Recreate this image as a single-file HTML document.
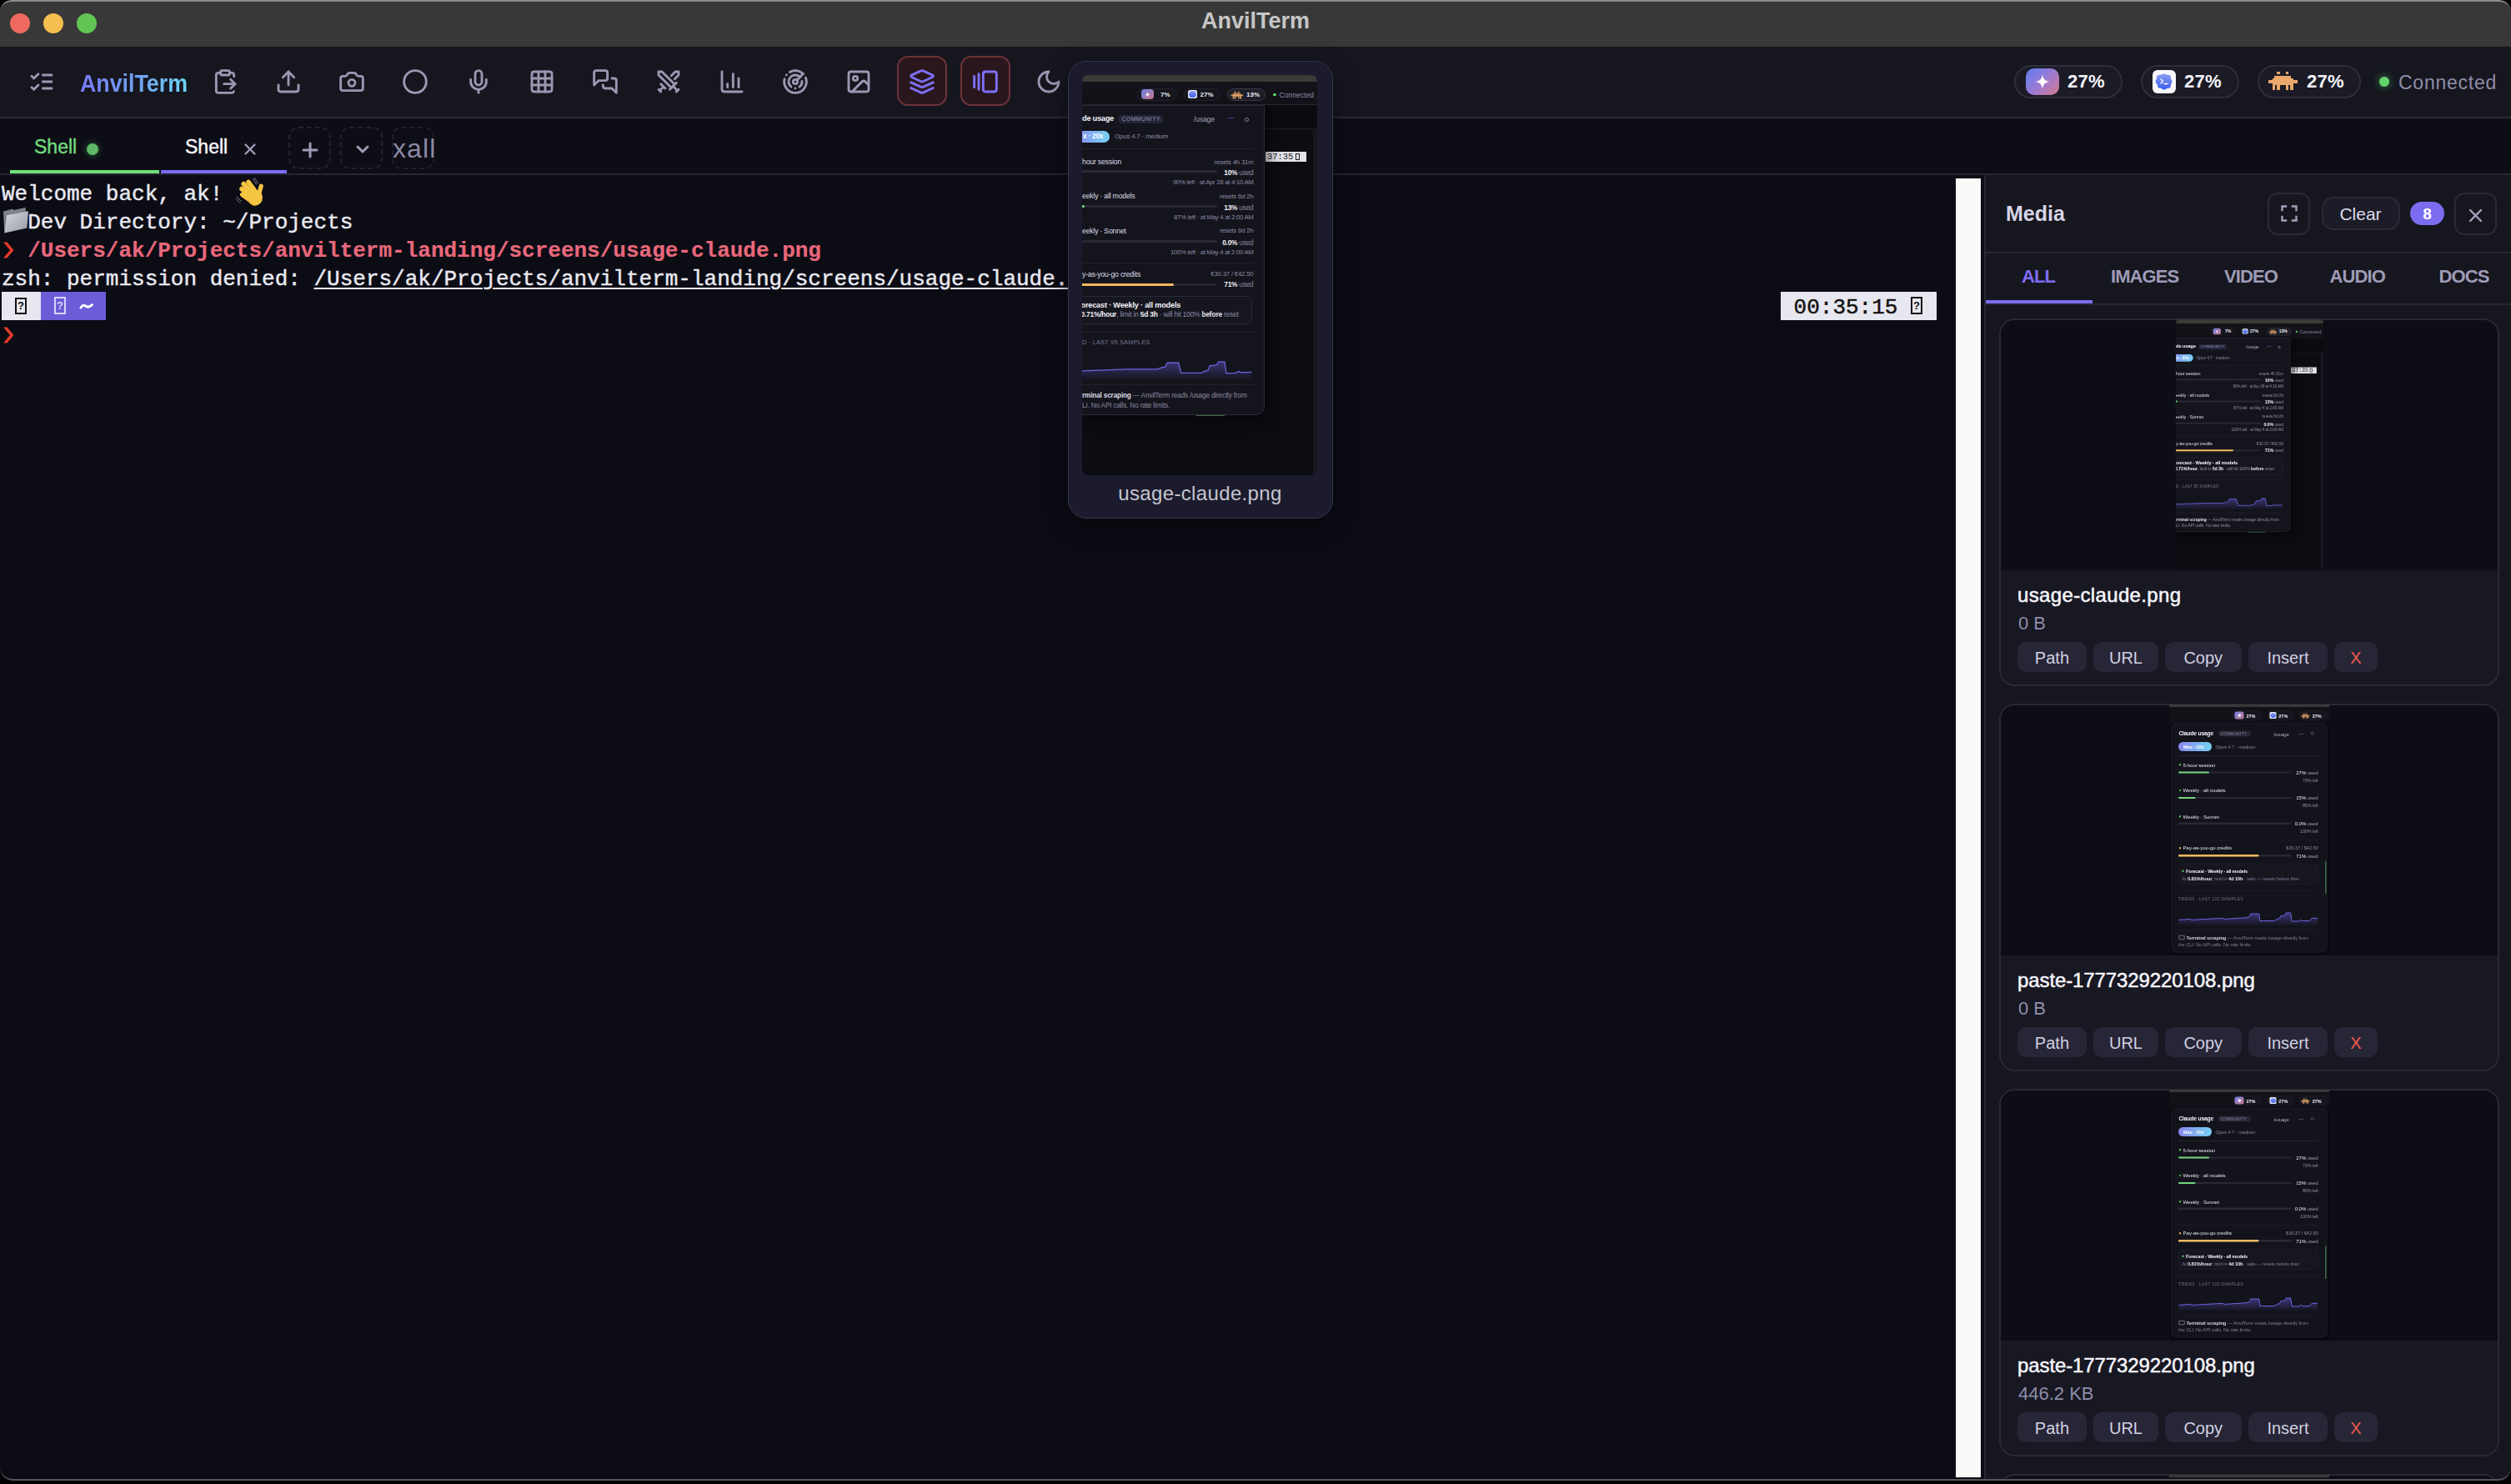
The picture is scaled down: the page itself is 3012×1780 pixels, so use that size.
<!DOCTYPE html>
<html><head><meta charset="utf-8">
<style>
*{box-sizing:border-box;margin:0;padding:0}
html,body{width:3012px;height:1780px;overflow:hidden;background:#000}
body{font-family:"Liberation Sans",sans-serif;position:relative}
.a{position:absolute}
#win{position:absolute;left:0;top:0;width:3012px;height:1776px;border-radius:14px;overflow:hidden;background:#0c0c15}
#winbot{position:absolute;left:0;top:1700px;width:3012px;height:76px;border-radius:0 0 16px 16px;border-bottom:2px solid #55555a;pointer-events:none}
#titlebar{position:absolute;left:0;top:0;width:3012px;height:56px;background:#383838;border-top:2px solid #8c8c8c;border-radius:14px 14px 0 0}
.tl{position:absolute;top:14px;width:24px;height:24px;border-radius:50%}
#title{position:absolute;left:0;width:3012px;top:8px;text-align:center;font-weight:bold;font-size:27px;color:#c6c6c6}
#toolbar{position:absolute;left:0;top:56px;width:3012px;height:86px;background:#16161f;border-bottom:2px solid #2a2a36}
#tabbar{position:absolute;left:0;top:142px;width:3012px;height:68px;background:#0d0d16;border-bottom:2px solid #262631}
.ic{position:absolute;width:32px;height:32px;fill:none;stroke:#9a98b2;stroke-width:2.15;stroke-linecap:round;stroke-linejoin:round}
.ic.on{stroke:#7f70f7}
.actbtn{position:absolute;top:67px;width:60px;height:60px;border-radius:13px;border:2px solid #6e3338;background:#2a171e}
.t{position:absolute;left:2px;font-family:"Liberation Mono",monospace;font-size:26px;line-height:34px;height:34px;white-space:pre;color:#e9e9f1;-webkit-text-stroke:0.45px currentColor}
#scroll{position:absolute;left:2346px;top:214px;width:30px;height:1558px;background:#fafaf8}
#media{position:absolute;left:2380px;top:210px;width:632px;height:1566px;background:#16161f;border-left:2px solid #282833;overflow:hidden}
.pill{position:absolute;top:78px;height:40px;border-radius:20px;border:2px solid #2e2e3a;background:#1b1b26}
.pct{position:absolute;top:86px;font-weight:bold;font-size:22px;color:#f4f4f8;letter-spacing:0.3px}
.card{left:2398px;width:600px;height:441px;border-radius:19px;border:2px solid #292934;background:#181823;overflow:hidden}
.cimg{position:absolute;left:0;top:0;width:100%;height:300px;background:#0d0d15}
.ctitle{left:2420px;font-size:24px;line-height:1;color:#f6f6fb;white-space:nowrap;letter-spacing:-0.1px;-webkit-text-stroke:0.5px #f6f6fb}
.csize{left:2421px;font-size:22px;line-height:1;color:#8f8daa;white-space:nowrap}
.cbtn{height:35.7px;border-radius:10px;background:#272637}
.cbtxt{text-align:center;font-size:20px;line-height:1;color:#d2d1e2;white-space:nowrap}
</style></head><body>
<div id="win">
  <div id="titlebar">
    <div class="tl" style="left:12px;background:#ee6a5f"></div>
    <div class="tl" style="left:52px;background:#f5bf4f"></div>
    <div class="tl" style="left:92px;background:#61c554"></div>
    <div id="title">AnvilTerm</div>
  </div>
  <div id="toolbar"></div>
  <!--TOOLBAR-->
  <svg class="ic" style="left:34px;top:82px" viewBox="0 0 24 24"><path d="m3 17 2 2 4-4"/><path d="m3 7 2 2 4-4"/><path d="M13 6h8"/><path d="M13 12h8"/><path d="M13 18h8"/></svg>
  <div class="a" id="logo" style="left:96px;top:85px;font-size:29.5px;line-height:1;font-weight:bold;white-space:nowrap;transform:scaleX(0.908);transform-origin:0 0;background:linear-gradient(90deg,#7a78f4 0%,#6fa0f2 50%,#6fd6f4 100%);-webkit-background-clip:text;background-clip:text;color:transparent">AnvilTerm</div>
  <svg class="ic" style="left:253.5px;top:82px" viewBox="0 0 24 24"><path d="M11 14h10"/><path d="M16 4h2a2 2 0 0 1 2 2v1.344"/><path d="m17 18 4-4-4-4"/><path d="M8 4H6a2 2 0 0 0-2 2v14a2 2 0 0 0 2 2h12a2 2 0 0 0 1.793-1.113"/><rect x="8" y="2" width="8" height="4" rx="1"/></svg>
  <svg class="ic" style="left:329.5px;top:82px" viewBox="0 0 24 24"><path d="M12 3v12"/><path d="m17 8-5-5-5 5"/><path d="M21 15v4a2 2 0 0 1-2 2H5a2 2 0 0 1-2-2v-4"/></svg>
  <svg class="ic" style="left:405.5px;top:82px" viewBox="0 0 24 24"><path d="M13.997 4a2 2 0 0 1 1.76 1.05l.486.9A2 2 0 0 0 18.003 7H20a2 2 0 0 1 2 2v9a2 2 0 0 1-2 2H4a2 2 0 0 1-2-2V9a2 2 0 0 1 2-2h1.997a2 2 0 0 0 1.759-1.048l.489-.904A2 2 0 0 1 10.004 4z"/><circle cx="12" cy="13" r="3"/></svg>
  <svg class="ic" style="left:481.5px;top:82px" viewBox="0 0 24 24"><circle cx="12" cy="12" r="10"/></svg>
  <svg class="ic" style="left:557.5px;top:82px" viewBox="0 0 24 24"><path d="M12 19v3"/><path d="M19 10v2a7 7 0 0 1-14 0v-2"/><rect x="9" y="2" width="6" height="13" rx="3"/></svg>
  <svg class="ic" style="left:633.5px;top:82px" viewBox="0 0 24 24"><rect width="18" height="18" x="3" y="3" rx="2"/><path d="M3 9h18"/><path d="M3 15h18"/><path d="M9 3v18"/><path d="M15 3v18"/></svg>
  <svg class="ic" style="left:709.5px;top:82px" viewBox="0 0 24 24"><path d="M14 9a2 2 0 0 1-2 2H6l-4 4V4a2 2 0 0 1 2-2h8a2 2 0 0 1 2 2z"/><path d="M18 9h2a2 2 0 0 1 2 2v11l-4-4h-6a2 2 0 0 1-2-2v-1"/></svg>
  <svg class="ic" style="left:785.5px;top:82px" viewBox="0 0 24 24"><polyline points="14.5 17.5 3 6 3 3 6 3 17.5 14.5"/><line x1="13" x2="19" y1="19" y2="13"/><line x1="16" x2="20" y1="16" y2="20"/><line x1="19" x2="21" y1="21" y2="19"/><polyline points="14.5 6.5 18 3 21 3 21 6 17.5 9.5"/><line x1="5" x2="9" y1="14" y2="18"/><line x1="7" x2="4" y1="17" y2="20"/><line x1="3" x2="5" y1="19" y2="21"/></svg>
  <svg class="ic" style="left:861.5px;top:82px" viewBox="0 0 24 24"><path d="M3 3v16a2 2 0 0 0 2 2h16"/><path d="M18 17V9"/><path d="M13 17V5"/><path d="M8 17v-3"/></svg>
  <svg class="ic" style="left:937.5px;top:82px" viewBox="0 0 24 24"><path d="M19.07 4.93A10 10 0 0 0 6.99 3.34"/><path d="M4 6h.01"/><path d="M2.29 9.62A10 10 0 1 0 21.31 8.35"/><path d="M16.24 7.76A6 6 0 1 0 8.23 16.67"/><path d="M12 18h.01"/><path d="M17.99 11.66A6 6 0 0 1 15.77 16.67"/><circle cx="12" cy="12" r="2"/><path d="m13.41 10.59 5.66-5.66"/></svg>
  <svg class="ic" style="left:1013.5px;top:82px" viewBox="0 0 24 24"><rect width="18" height="18" x="3" y="3" rx="2" ry="2"/><circle cx="9" cy="9" r="2"/><path d="m21 15-3.086-3.086a2 2 0 0 0-2.828 0L6 21"/></svg>
  <div class="actbtn" style="left:1076px"></div>
  <svg class="ic on" style="left:1089.5px;top:82px" viewBox="0 0 24 24"><path d="m12.83 2.18a2 2 0 0 0-1.66 0L2.6 6.08a1 1 0 0 0 0 1.83l8.58 3.91a2 2 0 0 0 1.66 0l8.58-3.9a1 1 0 0 0 0-1.83Z"/><path d="m22 17.65-9.17 4.16a2 2 0 0 1-1.66 0L2 17.65"/><path d="m22 12.65-9.17 4.16a2 2 0 0 1-1.66 0L2 12.65"/></svg>
  <div class="actbtn" style="left:1152px"></div>
  <svg class="ic on" style="left:1165.5px;top:82px" viewBox="0 0 24 24"><path d="M2 7v10"/><path d="M6 5v14"/><rect width="12" height="18" x="10" y="3" rx="2"/></svg>
  <svg class="ic" style="left:1241.5px;top:82px" viewBox="0 0 24 24"><path d="M12 3a6 6 0 0 0 9 9 9 9 0 1 1-9-9Z"/></svg>

  <div class="pill" style="left:2416px;width:130px"></div>
  <div class="a" style="left:2430px;top:82px;width:40px;height:32px;border-radius:10px;background:linear-gradient(135deg,#5d80ee 0%,#9b7ad6 50%,#d57a8a 100%)"></div>
  <svg class="a" style="left:2440px;top:88px;width:20px;height:20px" viewBox="0 0 20 20"><path d="M10 1 C10.8 7 13 9.2 19 10 C13 10.8 10.8 13 10 19 C9.2 13 7 10.8 1 10 C7 9.2 9.2 7 10 1Z" fill="#fff"/></svg>
  <div class="pct" style="left:2480px;top:87.2px;line-height:1">27%</div>
  <div class="pill" style="left:2568px;width:118px"></div>
  <div class="a" style="left:2582px;top:84px;width:28px;height:28px;border-radius:6px;background:#f8f8fb"></div>
  <svg class="a" style="left:2584px;top:86px;width:24px;height:24px" viewBox="0 0 24 24"><defs><linearGradient id="bg2" x1="0" y1="0" x2="0" y2="1"><stop offset="0" stop-color="#8aa0f4"/><stop offset="1" stop-color="#3a5cf0"/></linearGradient></defs><path d="M12 2.5c1.6 0 2.4 1 3.6 1.3 1.3.3 2.6-.2 3.6.8s.6 2.3.9 3.6c.3 1.2 1.4 2 1.4 3.6s-1.1 2.4-1.4 3.6c-.3 1.3.1 2.6-.9 3.6s-2.3.6-3.6.9c-1.2.3-2 1.6-3.6 1.6s-2.4-1.3-3.6-1.6c-1.3-.3-2.6.1-3.6-.9s-.6-2.3-.9-3.6C2.6 14.2 1.5 13.4 1.5 11.8s1.1-2.4 1.4-3.6c.3-1.3-.1-2.6.9-3.6s2.3-.5 3.6-.8C8.6 3.5 10.4 2.5 12 2.5z" fill="url(#bg2)"/><path d="M8 9l2.5 2.5L8 14" stroke="#fff" stroke-width="1.4" fill="none" stroke-linecap="round"/><path d="M12 14.5h4" stroke="#fff" stroke-width="1.4" stroke-linecap="round"/></svg>
  <div class="pct" style="left:2620px;top:87.2px;line-height:1">27%</div>
  <div class="pill" style="left:2708px;width:124px"></div>
  <svg class="a" style="left:2715px;top:80px;width:50px;height:32px" viewBox="0 0 50 32" shape-rendering="crispEdges" fill="#e9a86c"><rect x="16" y="6" width="4" height="3"/><rect x="27" y="6" width="3" height="3"/><rect x="13" y="11" width="20" height="3"/><rect x="11" y="14" width="25" height="2"/><rect x="6" y="16" width="35" height="4"/><rect x="11" y="20" width="25" height="2"/><rect x="11" y="22" width="3" height="6"/><rect x="16" y="22" width="4" height="6"/><rect x="27" y="22" width="3" height="6"/><rect x="32" y="22" width="4" height="6"/></svg>
  <div class="pct" style="left:2767px;top:87.2px;line-height:1">27%</div>
  <div class="a" style="left:2854px;top:92px;width:12px;height:12px;border-radius:50%;background:#62d46e;box-shadow:0 0 8px 2px rgba(80,200,100,0.35)"></div>
  <div class="a" style="left:2877px;top:87.5px;font-size:23px;line-height:1;color:#8f8da8;white-space:nowrap;letter-spacing:0.75px">Connected</div>
<!--/TOOLBAR-->
  <div id="tabbar"></div>
  <!--TABS-->
  <div class="a" style="left:12px;top:204px;width:179px;height:4.3px;background:#72e07c"></div>
  <div class="a" style="left:193px;top:204px;width:151px;height:4.3px;background:#7a6cf5"></div>
  <div class="a" style="left:41px;top:164.7px;font-size:23px;line-height:1;color:#72d97c;white-space:nowrap;-webkit-text-stroke:0.45px #72d97c">Shell</div>
  <div class="a" style="left:104px;top:171.5px;width:14px;height:14px;border-radius:50%;background:#5fb866;box-shadow:0 0 6px 2px rgba(70,160,80,0.35)"></div>
  <div class="a" style="left:222px;top:164.7px;font-size:23px;line-height:1;color:#f6f6fa;white-space:nowrap;-webkit-text-stroke:0.45px #f6f6fa">Shell</div>
  <svg class="a" style="left:292px;top:171px;width:16px;height:16px" viewBox="0 0 16 16"><path d="M2.5 2.5l11 11M13.5 2.5l-11 11" stroke="#9d9bb4" stroke-width="2.4" stroke-linecap="round"/></svg>
  <div class="a" style="left:346px;top:152px;width:51px;height:51px;border-radius:12px;border:2px dashed #23232d"></div>
  <svg class="a" style="left:362px;top:170px;width:20px;height:20px" viewBox="0 0 20 20"><path d="M10 2v16M2 10h16" stroke="#9d9bb4" stroke-width="3" stroke-linecap="round"/></svg>
  <div class="a" style="left:408px;top:152px;width:51px;height:51px;border-radius:12px;border:2px dashed #23232d"></div>
  <svg class="a" style="left:426px;top:171px;width:18px;height:16px" viewBox="0 0 18 16"><path d="M3 5l6 6 6-6" stroke="#9d9bb4" stroke-width="3" fill="none" stroke-linecap="round" stroke-linejoin="round"/></svg>
  <div class="a" style="left:470px;top:152px;width:51px;height:51px;border-radius:12px;border:2px dashed #1f1f29"></div>
  <div class="a" style="left:471px;top:162.4px;font-size:32px;line-height:1;color:#8b89a2;white-space:nowrap;letter-spacing:1.1px">xall</div>
<!--/TABS-->
  <div id="terminal">
  <!--TERM-->
  <div class="t" style="top:216px">Welcome back, ak!</div>
  <svg class="a" style="left:275px;top:208px;width:50px;height:44px" viewBox="0 0 50 44">
    <g stroke="#f4c443" stroke-linecap="round" fill="none">
      <path d="M23 10.5L30 20" stroke-width="5.6"/>
      <path d="M17.2 12.5L26 22.5" stroke-width="5.6"/>
      <path d="M15 18.5L24.5 26.5" stroke-width="5.6"/>
      <path d="M15.8 25.5L24 31.5" stroke-width="5.6"/>
      <path d="M38.2 15.2L35.5 25" stroke-width="5.2"/>
    </g>
    <ellipse cx="31" cy="29" rx="9" ry="9.6" fill="#f4c443"/>
    <path d="M22 31c2 5 6 8 10 7.5" stroke="#e6a22e" stroke-width="1.2" fill="none" opacity="0.6"/>
    <path d="M28.5 6.5l4 6.5M30.5 5.5l4 6.5M9 28l5.5 5.5M8 30.5l5 5" stroke="#7c7f8e" stroke-width="1" stroke-linecap="round"/>
  </svg>
  <svg class="a" style="left:0px;top:244px;width:40px;height:40px" viewBox="0 0 40 40">
    <defs><linearGradient id="fgF" x1="0" y1="0" x2="1" y2="1"><stop offset="0" stop-color="#d6dade"/><stop offset="1" stop-color="#969aa2"/></linearGradient></defs>
    <path d="M4 9.5L15.5 6.4L16.3 7.9L30.6 5L31 9.8L5.4 35.6Z" fill="#7b828b"/>
    <path d="M8.1 14.3L34 9.2L32.3 29.6L5.4 35.6Z" fill="url(#fgF)"/>
  </svg>
  <div class="t" style="top:250px">  Dev Directory: ~/Projects</div>
  <svg class="a" style="left:3px;top:289px;width:14px;height:22px" viewBox="0 0 14 22"><path d="M1 1.5h4.5l8 9.5-8 9.5H1l8-9.5z" fill="#e5392c"/></svg>
  <div class="t" style="top:284px;color:#e8687b;font-weight:bold;-webkit-text-stroke:0.2px #e8687b">  /Users/ak/Projects/anvilterm-landing/screens/usage-claude.png</div>
  <div class="t" style="top:318px">zsh: permission denied: <span style="text-decoration:underline;text-decoration-thickness:2px;text-underline-offset:3px">/Users/ak/Projects/anvilterm-landing/screens/usage-claude.png</span></div>
  <div class="a" style="left:2px;top:350px;width:47px;height:34px;background:#e7e7ef"></div>
  <div class="a" style="left:49px;top:350px;width:78px;height:34px;background:#6b5cd8"></div>
  <div class="a" style="left:18px;top:357px;width:14px;height:20px;border:2px solid #111;font:bold 13px/16px 'Liberation Sans',sans-serif;color:#111;text-align:center">?</div>
  <div class="a" style="left:65px;top:356px;width:14px;height:21px;border:2px solid #d9d4fb;font:bold 13px/17px 'Liberation Sans',sans-serif;color:#d9d4fb;text-align:center">?</div>
  <svg class="a" style="left:95px;top:361px;width:18px;height:12px" viewBox="0 0 18 12"><path d="M2 8c1.5-3 3.5-3.5 6-1.8s4.5 1.5 7.5-1.7" stroke="#fff" stroke-width="3" fill="none" stroke-linecap="round"/></svg>
  <svg class="a" style="left:3px;top:391px;width:14px;height:22px" viewBox="0 0 14 22"><path d="M1 1.5h4.5l8 9.5-8 9.5H1l8-9.5z" fill="#e5392c"/></svg>
  <div class="a" style="left:2136px;top:350px;width:187px;height:34px;background:#e7e7ef"></div>
  <div class="t" style="left:2136px;top:352px;color:#111"> 00:35:15</div>
  <div class="a" style="left:2292px;top:356px;width:14px;height:21px;border:2px solid #111;font:bold 13px/17px 'Liberation Sans',sans-serif;color:#111;text-align:center">?</div>
<!--/TERM-->
  </div>
  <div id="scroll"></div>
  <div id="media"></div>
  <!--MEDIA-->
  <div class="a" style="left:2406px;top:243.8px;font-size:25px;line-height:1;font-weight:bold;color:#d6d4e6;white-space:nowrap">Media</div>
  <div class="a" style="left:2720px;top:230.5px;width:51px;height:51px;border-radius:12px;border:2px solid #2a2a36"></div>
  <svg class="a" style="left:2735px;top:244.5px;width:22px;height:22px" viewBox="0 0 22 22"><path d="M2.5 7V2.5H7M15 2.5h4.5V7M19.5 15v4.5H15M7 19.5H2.5V15" stroke="#a3a1ba" stroke-width="2.4" fill="none" stroke-linecap="square"/></svg>
  <div class="a" style="left:2784.5px;top:236px;width:94px;height:40px;border-radius:14px;border:2px solid #2a2a36;background:#1c1b28"></div>
  <div class="a" style="left:2784.5px;width:94px;text-align:center;top:245.9px;font-size:21px;line-height:1;color:#dedcec;white-space:nowrap">Clear</div>
  <div class="a" style="left:2891px;top:241.7px;width:41px;height:28.5px;border-radius:14px;background:#7b6cf0"></div>
  <div class="a" style="left:2891px;width:41px;text-align:center;top:247px;font-size:19px;line-height:1;font-weight:bold;color:#fff">8</div>
  <div class="a" style="left:2944px;top:230.5px;width:51px;height:51px;border-radius:12px;border:2px solid #2a2a36"></div>
  <svg class="a" style="left:2961px;top:250px;width:17px;height:17px" viewBox="0 0 17 17"><path d="M2 2l13 13M15 2L2 15" stroke="#a3a1ba" stroke-width="2.4" stroke-linecap="round"/></svg>
  <div class="a" style="left:2382px;top:302px;width:630px;height:2px;background:#262631"></div>
  <div class="a" style="left:2382px;top:360px;width:128px;height:4px;background:#7b6cf0"></div>
  <div class="a" style="left:2382px;top:364px;width:630px;height:2px;background:#262631"></div>
  <div class="a" style="left:2365px;width:160px;text-align:center;top:321.4px;font-size:22px;line-height:1;font-weight:bold;color:#7d6ef3;white-space:nowrap;letter-spacing:-0.9px">ALL</div>
  <div class="a" style="left:2492.7px;width:160px;text-align:center;top:321.4px;font-size:22px;line-height:1;font-weight:bold;color:#9e9cb6;white-space:nowrap;letter-spacing:-0.9px">IMAGES</div>
  <div class="a" style="left:2620px;width:160px;text-align:center;top:321.4px;font-size:22px;line-height:1;font-weight:bold;color:#9e9cb6;white-space:nowrap;letter-spacing:-0.9px">VIDEO</div>
  <div class="a" style="left:2747.7px;width:160px;text-align:center;top:321.4px;font-size:22px;line-height:1;font-weight:bold;color:#9e9cb6;white-space:nowrap;letter-spacing:-0.9px">AUDIO</div>
  <div class="a" style="left:2875.6px;width:160px;text-align:center;top:321.4px;font-size:22px;line-height:1;font-weight:bold;color:#9e9cb6;white-space:nowrap;letter-spacing:-0.9px">DOCS</div>
  <div class="a card" style="top:382px"><div class="cimg"></div></div>
  <!--THUMB0--><div class="a" style="left:2610px;top:383px;width:282px;height:480px;transform:scale(0.6277,0.625);transform-origin:0 0"><div class="a" style="left:0;top:0;width:282px;height:480px;overflow:hidden;border-radius:7px 7px 8px 8px;background:#0c0c13"><div class="a" style="left:0.00px;top:0.00px;width:282.00px;height:7.50px;background:#3a3a36"></div><div class="a" style="left:0.00px;top:7.50px;width:282.00px;height:28.00px;background:#121218;border-bottom:1px solid #2a2a33"></div><div class="a" style="left:65.70px;top:15.90px;width:48.00px;height:14.80px;border-radius:8px;border:1px solid #24242e;background:#15151d"></div><div class="a" style="left:70.80px;top:17.20px;width:14.80px;height:11.80px;border-radius:4px;background:linear-gradient(135deg,#6a80e8,#d07a8e)"></div><svg class="a" style="left:74.7px;top:19.6px;width:7px;height:7px" viewBox="0 0 20 20"><path d="M10 1C10.8 7 13 9.2 19 10 13 10.8 10.8 13 10 19 9.2 13 7 10.8 1 10 7 9.2 9.2 7 10 1Z" fill="#fff"/></svg><div class="a" style="left:94.00px;top:19.53px;font-size:8px;line-height:1;color:#f2f2f7;font-weight:bold;white-space:nowrap;">7%</div><div class="a" style="left:122.30px;top:15.90px;width:43.40px;height:14.80px;border-radius:8px;border:1px solid #24242e;background:#15151d"></div><div class="a" style="left:127.00px;top:17.60px;width:10.80px;height:10.80px;border-radius:2.5px;background:#f0f0f6"></div><div class="a" style="left:128.20px;top:18.80px;width:8.40px;height:8.40px;border-radius:50%;background:linear-gradient(#8aa0f4,#4060f0)"></div><div class="a" style="left:141.50px;top:19.53px;font-size:8px;line-height:1;color:#f2f2f7;font-weight:bold;white-space:nowrap;">27%</div><div class="a" style="left:174.30px;top:15.90px;width:46.00px;height:14.80px;border-radius:8px;border:1px solid #3a3a46;background:#1e1e28"></div><svg class="a" style="left:178px;top:18.5px;width:16px;height:10px" viewBox="6 5 36 24" fill="#e9a86c"><rect x="16" y="6" width="4" height="3"/><rect x="27" y="6" width="3" height="3"/><rect x="13" y="11" width="20" height="3"/><rect x="11" y="14" width="25" height="2"/><rect x="6" y="16" width="35" height="4"/><rect x="11" y="20" width="25" height="2"/><rect x="11" y="22" width="3" height="6"/><rect x="16" y="22" width="4" height="6"/><rect x="27" y="22" width="3" height="6"/><rect x="32" y="22" width="4" height="6"/></svg><div class="a" style="left:197.00px;top:19.53px;font-size:8px;line-height:1;color:#f2f2f7;font-weight:bold;white-space:nowrap;">13%</div><div class="a" style="left:229.00px;top:21.80px;width:3.60px;height:3.60px;border-radius:50%;background:#5fd46a"></div><div class="a" style="left:236.50px;top:19.52px;font-size:8.6px;line-height:1;color:#8f8da8;font-weight:normal;white-space:nowrap;">Connected</div><div class="a" style="left:218.00px;top:36.40px;width:64.00px;height:29.00px;background:#0b0b10;border-bottom:1px solid #1e1e26"></div><div class="a" style="left:220.30px;top:91.60px;width:48.60px;height:12.80px;background:#e2e2ea"></div><div class="a" style="left:222.00px;top:93.00px;font-size:10.4px;line-height:1;color:#222;font-weight:normal;white-space:nowrap;font-family:'Liberation Mono',monospace">37:35</div><div class="a" style="left:256.00px;top:93.50px;width:5.00px;height:8.00px;border:1px solid #222"></div><div class="a" style="left:276.50px;top:66.00px;width:5.50px;height:414.00px;background:#17171e"></div><div class="a" style="left:-12.00px;top:36.40px;width:230.60px;height:372.10px;background:#14141c;border:1px solid #2c2c38;border-radius:0 0 10px 10px;box-shadow:4px 6px 18px rgba(0,0,0,0.55)"></div><div class="a" style="left:0.00px;top:48.13px;font-size:9.3px;line-height:1;color:#f2f2f7;font-weight:bold;white-space:nowrap;letter-spacing:-0.3px;">de usage</div><div class="a" style="left:44.20px;top:47.90px;width:52.50px;height:10.40px;border-radius:3px;background:#24243a"></div><div class="a" style="left:47.50px;top:49.84px;font-size:6.8px;line-height:1;color:#9a98b0;font-weight:normal;white-space:nowrap;letter-spacing:0.5px;">COMMUNITY</div><div class="a" style="left:133.80px;top:49.05px;font-size:8.8px;line-height:1;color:#a0a0b2;font-weight:normal;white-space:nowrap;letter-spacing:-0.2px;">/usage</div><div class="a" style="left:174.50px;top:48.23px;font-size:8px;line-height:1;color:#7b6cf0;font-weight:bold;white-space:nowrap;">···</div><div class="a" style="left:195.20px;top:50.80px;width:4.80px;height:4.80px;border-radius:50%;border:1px solid #8c8aa2"></div><div class="a" style="left:-10.00px;top:66.80px;width:43.00px;height:14.50px;border-radius:7.5px;background:linear-gradient(90deg,#8a8cf0,#78d2f2)"></div><div class="a" style="left:1.00px;top:70.36px;font-size:8.2px;line-height:1;color:#fff;font-weight:bold;white-space:nowrap;letter-spacing:-0.2px;">x · 20x</div><div class="a" style="left:39.10px;top:70.13px;font-size:8.0px;line-height:1;color:#8c8aa2;font-weight:normal;white-space:nowrap;letter-spacing:-0.25px;">Opus 4.7 · medium</div><div class="a" style="left:0.00px;top:88.30px;width:205.50px;height:1.00px;background:#23232d"></div><div class="a" style="left:0.00px;top:100.05px;font-size:8.8px;line-height:1;color:#dcdce6;font-weight:normal;white-space:nowrap;letter-spacing:-0.25px;">hour session</div><div class="a" style="left:-194.50px;width:400px;text-align:right;top:100.90px;font-size:7.8px;line-height:1;color:#8c8aa2;font-weight:normal;white-space:nowrap;letter-spacing:-0.2px;">resets 4h 31m</div><div class="a" style="left:-10.00px;top:113.80px;width:171.60px;height:3.60px;border-radius:2px;background:#282834"></div><div class="a" style="left:-194.50px;width:400px;text-align:right;top:113.09px;font-size:8.4px;line-height:1;color:#8c8aa2;font-weight:normal;white-space:nowrap;letter-spacing:-0.25px;"><b style="color:#f2f2f7">10%</b> used</div><div class="a" style="left:-194.50px;width:400px;text-align:right;top:125.40px;font-size:7.8px;line-height:1;color:#8c8aa2;font-weight:normal;white-space:nowrap;letter-spacing:-0.3px;">90% left · at Apr 28 at 4:10 AM</div><div class="a" style="left:0.00px;top:141.05px;font-size:8.8px;line-height:1;color:#dcdce6;font-weight:normal;white-space:nowrap;letter-spacing:-0.25px;">eekly · all models</div><div class="a" style="left:-194.50px;width:400px;text-align:right;top:141.90px;font-size:7.8px;line-height:1;color:#8c8aa2;font-weight:normal;white-space:nowrap;letter-spacing:-0.2px;">resets 6d 2h</div><div class="a" style="left:-10.00px;top:155.80px;width:171.60px;height:3.60px;border-radius:2px;background:#282834"></div><div class="a" style="left:-10.00px;top:155.80px;width:13.00px;height:3.60px;border-radius:2px;background:#6fd67a"></div><div class="a" style="left:-194.50px;width:400px;text-align:right;top:155.09px;font-size:8.4px;line-height:1;color:#8c8aa2;font-weight:normal;white-space:nowrap;letter-spacing:-0.25px;"><b style="color:#f2f2f7">13%</b> used</div><div class="a" style="left:-194.50px;width:400px;text-align:right;top:167.40px;font-size:7.8px;line-height:1;color:#8c8aa2;font-weight:normal;white-space:nowrap;letter-spacing:-0.3px;">87% left · at May 4 at 2:00 AM</div><div class="a" style="left:0.00px;top:182.55px;font-size:8.8px;line-height:1;color:#dcdce6;font-weight:normal;white-space:nowrap;letter-spacing:-0.25px;">eekly · Sonnet</div><div class="a" style="left:-194.50px;width:400px;text-align:right;top:183.40px;font-size:7.8px;line-height:1;color:#8c8aa2;font-weight:normal;white-space:nowrap;letter-spacing:-0.2px;">resets 6d 2h</div><div class="a" style="left:-10.00px;top:197.80px;width:171.60px;height:3.60px;border-radius:2px;background:#282834"></div><div class="a" style="left:-194.50px;width:400px;text-align:right;top:197.09px;font-size:8.4px;line-height:1;color:#8c8aa2;font-weight:normal;white-space:nowrap;letter-spacing:-0.25px;"><b style="color:#f2f2f7">0.0%</b> used</div><div class="a" style="left:-194.50px;width:400px;text-align:right;top:209.40px;font-size:7.8px;line-height:1;color:#8c8aa2;font-weight:normal;white-space:nowrap;letter-spacing:-0.3px;">100% left · at May 4 at 2:00 AM</div><div class="a" style="left:0.00px;top:225.40px;width:205.50px;height:1.00px;background:#23232d"></div><div class="a" style="left:0.00px;top:234.55px;font-size:8.8px;line-height:1;color:#dcdce6;font-weight:normal;white-space:nowrap;letter-spacing:-0.25px;">y-as-you-go credits</div><div class="a" style="left:-194.50px;width:400px;text-align:right;top:235.40px;font-size:7.8px;line-height:1;color:#8c8aa2;font-weight:normal;white-space:nowrap;letter-spacing:-0.2px;">€30.37 / €42.50</div><div class="a" style="left:-10.00px;top:250.00px;width:171.20px;height:3.00px;border-radius:2px;background:#262630"></div><div class="a" style="left:-10.00px;top:250.00px;width:119.80px;height:3.00px;border-radius:2px;background:#f0b860"></div><div class="a" style="left:-194.50px;width:400px;text-align:right;top:247.39px;font-size:8.4px;line-height:1;color:#8c8aa2;font-weight:normal;white-space:nowrap;letter-spacing:-0.25px;"><b style="color:#f2f2f7">71%</b> used</div><div class="a" style="left:-10.00px;top:264.50px;width:214.40px;height:34.00px;border-radius:6px;border:1px solid #2a2a36;background:#16161f"></div><div class="a" style="left:-1.50px;top:271.71px;font-size:9.2px;line-height:1;color:#f2f2f7;font-weight:bold;white-space:nowrap;letter-spacing:-0.2px;">orecast · Weekly · all models</div><div class="a" style="left:-1.50px;top:283.39px;font-size:8.4px;line-height:1;color:#8c8aa2;font-weight:normal;white-space:nowrap;letter-spacing:-0.2px;"><b style="color:#f2f2f7">0.71%/hour</b>, limit in <b style="color:#f2f2f7">5d 3h</b> · will hit 100% <b style="color:#e0e0ea">before</b> reset</div><div class="a" style="left:0.00px;top:308.30px;width:205.50px;height:1.00px;background:#23232d"></div><div class="a" style="left:0.00px;top:316.57px;font-size:7.6px;line-height:1;color:#76748c;font-weight:normal;white-space:nowrap;letter-spacing:0.1px;">D · LAST 95 SAMPLES</div><svg class="a" style="left:0;top:0;width:282px;height:480px;overflow:visible" viewBox="0 0 282 480"><defs><linearGradient id="cgA2" x1="0" y1="0" x2="0" y2="1"><stop offset="0" stop-color="#5b50b8" stop-opacity="0.55"/><stop offset="1" stop-color="#5b50b8" stop-opacity="0"/></linearGradient></defs><path d="M-0.3 354.8 L53.0 352.8 L90.6 352.8 L94.7 351.1 L100.0 350.0 L102.0 345.2 L115.6 344.8 L118.7 357.3 L142.8 357.3 L146.9 355.3 L151.1 354.2 L153.2 348.6 L161.5 348.0 L163.6 343.8 L170.9 343.8 L173.0 357.8 L184.5 357.3 L187.6 355.3 L190.8 356.9 L203.3 356.3 L203.3 366 L-0.3 366 Z" fill="url(#cgA2)" transform="translate(0,0)"/><path d="M-0.3 354.8 L53.0 352.8 L90.6 352.8 L94.7 351.1 L100.0 350.0 L102.0 345.2 L115.6 344.8 L118.7 357.3 L142.8 357.3 L146.9 355.3 L151.1 354.2 L153.2 348.6 L161.5 348.0 L163.6 343.8 L170.9 343.8 L173.0 357.8 L184.5 357.3 L187.6 355.3 L190.8 356.9 L203.3 356.3" fill="none" stroke="#6e62e0" stroke-width="1.3"/></svg><div class="a" style="left:0.00px;top:371.30px;width:205.50px;height:1.00px;background:#23232d"></div><div class="a" style="left:0.00px;top:381.06px;font-size:8.2px;line-height:1;color:#8c8aa2;font-weight:normal;white-space:nowrap;letter-spacing:-0.15px;"><b style="color:#dcdce6">rminal scraping</b> — AnvilTerm reads /usage directly from</div><div class="a" style="left:0.00px;top:392.56px;font-size:8.2px;line-height:1;color:#8c8aa2;font-weight:normal;white-space:nowrap;letter-spacing:-0.15px;">LI. No API calls. No rate limits.</div><div class="a" style="left:137.00px;top:407.50px;width:34.00px;height:1.20px;background:#3b6b45"></div></div></div><!--/THUMB0-->
  <div class="a ctitle" style="top:701.6px;letter-spacing:0.35px">usage-claude.png</div>
  <div class="a csize" style="top:737px">0 B</div>
  <div class="a cbtn" style="left:2420.1px;top:770.3px;width:82.7px"></div>
  <div class="a cbtxt" style="left:2420.1px;top:778.9px;width:82.7px;">Path</div>
  <div class="a cbtn" style="left:2511.3px;top:770.3px;width:77.3px"></div>
  <div class="a cbtxt" style="left:2511.3px;top:778.9px;width:77.3px;">URL</div>
  <div class="a cbtn" style="left:2596.9px;top:770.3px;width:91.7px"></div>
  <div class="a cbtxt" style="left:2596.9px;top:778.9px;width:91.7px;">Copy</div>
  <div class="a cbtn" style="left:2697.3px;top:770.3px;width:94.3px"></div>
  <div class="a cbtxt" style="left:2697.3px;top:778.9px;width:94.3px;">Insert</div>
  <div class="a cbtn" style="left:2800px;top:770.3px;width:51.8px"></div>
  <div class="a cbtxt" style="left:2800px;top:778.9px;width:51.8px;color:#ef5b4d">X</div>
  <div class="a card" style="top:844px"><div class="cimg"></div></div>
  <!--THUMB1--><div class="a" style="left:2602px;top:845px;width:384px;height:600px;transform:scale(0.5);transform-origin:0 0"><div class="a" style="left:0;top:0;width:384px;height:600px;overflow:hidden;background:#0c0c13"><div class="a" style="left:0.00px;top:0.00px;width:384.00px;height:6.00px;background:#38383a"></div><div class="a" style="left:0.00px;top:6.00px;width:384.00px;height:37.00px;background:#111117"></div><div class="a" style="left:150.60px;top:14.20px;width:70.40px;height:23.40px;border-radius:12px;border:1px solid #262630;background:#16161e"></div><div class="a" style="left:157.00px;top:17.20px;width:22.40px;height:17.60px;border-radius:5px;background:linear-gradient(135deg,#6a80e8,#d07a8e)"></div><div class="a" style="left:164.80px;top:22.60px;width:6.80px;height:6.80px;border-radius:50%;background:#fff"></div><div class="a" style="left:184.80px;top:23.49px;font-size:11px;line-height:1;color:#f2f2f7;font-weight:bold;white-space:nowrap;">27%</div><div class="a" style="left:234.80px;top:14.20px;width:64.00px;height:23.40px;border-radius:12px;border:1px solid #262630;background:#16161e"></div><div class="a" style="left:241.20px;top:18.00px;width:16.00px;height:16.00px;border-radius:3px;background:#f0f0f6"></div><div class="a" style="left:242.80px;top:19.60px;width:12.80px;height:12.80px;border-radius:50%;background:linear-gradient(#8aa0f4,#4060f0)"></div><div class="a" style="left:262.60px;top:23.49px;font-size:11px;line-height:1;color:#f2f2f7;font-weight:bold;white-space:nowrap;">27%</div><div class="a" style="left:311.40px;top:14.20px;width:67.20px;height:23.40px;border-radius:12px;border:1px solid #262630;background:#16161e"></div><svg class="a" style="left:316px;top:20px;width:22px;height:14px" viewBox="6 5 36 24" fill="#e9a86c"><rect x="16" y="6" width="4" height="3"/><rect x="27" y="6" width="3" height="3"/><rect x="13" y="11" width="20" height="3"/><rect x="11" y="14" width="25" height="2"/><rect x="6" y="16" width="35" height="4"/><rect x="11" y="20" width="25" height="2"/><rect x="11" y="22" width="3" height="6"/><rect x="16" y="22" width="4" height="6"/><rect x="27" y="22" width="3" height="6"/><rect x="32" y="22" width="4" height="6"/></svg><div class="a" style="left:343.40px;top:23.49px;font-size:11px;line-height:1;color:#f2f2f7;font-weight:bold;white-space:nowrap;">27%</div><div class="a" style="left:4.80px;top:44.00px;width:373.80px;height:550.60px;background:#13131b;border:1.5px solid #2a2a36;border-radius:12px;box-shadow:0 4px 12px rgba(0,0,0,0.5)"></div><div class="a" style="left:22.80px;top:63.06px;font-size:13.4px;line-height:1;color:#f2f2f7;font-weight:bold;white-space:nowrap;letter-spacing:-0.3px;">Claude usage</div><div class="a" style="left:117.60px;top:63.20px;width:78.80px;height:13.80px;border-radius:4px;background:#252534"></div><div class="a" style="left:123.00px;top:65.61px;font-size:9.2px;line-height:1;color:#8e8ca4;font-weight:normal;white-space:nowrap;letter-spacing:0.8px;">COMMUNITY</div><div class="a" style="left:250.80px;top:64.70px;font-size:12.4px;line-height:1;color:#aeacc0;font-weight:normal;white-space:nowrap;">/usage</div><div class="a" style="left:311.40px;top:63.69px;font-size:11px;line-height:1;color:#8c8aa2;font-weight:bold;white-space:nowrap;">···</div><div class="a" style="left:340.40px;top:66.40px;width:6.80px;height:6.80px;border-radius:50%;border:1px solid #8c8aa2"></div><div class="a" style="left:21.80px;top:89.80px;width:80.60px;height:22.40px;border-radius:12px;background:linear-gradient(90deg,#8a86ee,#76d0f0)"></div><div class="a" style="left:34.00px;top:96.69px;font-size:11px;line-height:1;color:#fff;font-weight:bold;white-space:nowrap;">Max · 20x</div><div class="a" style="left:111.20px;top:96.52px;font-size:11.2px;line-height:1;color:#8c8aa2;font-weight:normal;white-space:nowrap;">Opus 4.7 · medium</div><div class="a" style="left:22.00px;top:122.40px;width:335.20px;height:1.20px;background:#24242e"></div><div class="a" style="left:23.60px;top:142.40px;width:4.80px;height:4.80px;border-radius:50%;background:#62d46e"></div><div class="a" style="left:33.20px;top:138.64px;font-size:12px;line-height:1;color:#e2e2ec;font-weight:normal;white-space:nowrap;letter-spacing:-0.1px;">5-hour session</div><div class="a" style="left:22.00px;top:160.60px;width:271.40px;height:4.80px;border-radius:2px;background:#292935"></div><div class="a" style="left:22.00px;top:160.60px;width:74.00px;height:4.80px;border-radius:2px;background:#72d87c"></div><div class="a" style="left:-42.80px;width:400px;text-align:right;top:157.24px;font-size:12px;line-height:1;color:#a09eb4;font-weight:normal;white-space:nowrap;letter-spacing:-0.1px;"><span style="color:#ececf4">27%</span> used</div><div class="a" style="left:-42.80px;width:400px;text-align:right;top:176.09px;font-size:11px;line-height:1;color:#8e8ca4;font-weight:normal;white-space:nowrap;letter-spacing:-0.3px;">73% left</div><div class="a" style="left:23.60px;top:203.60px;width:4.80px;height:4.80px;border-radius:50%;background:#62d46e"></div><div class="a" style="left:33.20px;top:199.84px;font-size:12px;line-height:1;color:#e2e2ec;font-weight:normal;white-space:nowrap;letter-spacing:-0.1px;">Weekly · all models</div><div class="a" style="left:22.00px;top:221.60px;width:271.40px;height:4.80px;border-radius:2px;background:#292935"></div><div class="a" style="left:22.00px;top:221.60px;width:41.40px;height:4.80px;border-radius:2px;background:#72d87c"></div><div class="a" style="left:-42.80px;width:400px;text-align:right;top:218.24px;font-size:12px;line-height:1;color:#a09eb4;font-weight:normal;white-space:nowrap;letter-spacing:-0.1px;"><span style="color:#ececf4">15%</span> used</div><div class="a" style="left:-42.80px;width:400px;text-align:right;top:237.09px;font-size:11px;line-height:1;color:#8e8ca4;font-weight:normal;white-space:nowrap;letter-spacing:-0.3px;">85% left</div><div class="a" style="left:23.60px;top:266.40px;width:4.80px;height:4.80px;border-radius:50%;background:#62d46e"></div><div class="a" style="left:33.20px;top:262.64px;font-size:12px;line-height:1;color:#e2e2ec;font-weight:normal;white-space:nowrap;letter-spacing:-0.1px;">Weekly · Sonnet</div><div class="a" style="left:22.00px;top:283.40px;width:271.40px;height:4.80px;border-radius:2px;background:#292935"></div><div class="a" style="left:-42.80px;width:400px;text-align:right;top:280.04px;font-size:12px;line-height:1;color:#a09eb4;font-weight:normal;white-space:nowrap;letter-spacing:-0.1px;"><span style="color:#ececf4">0.0%</span> used</div><div class="a" style="left:-42.80px;width:400px;text-align:right;top:298.89px;font-size:11px;line-height:1;color:#8e8ca4;font-weight:normal;white-space:nowrap;letter-spacing:-0.3px;">100% left</div><div class="a" style="left:22.00px;top:324.00px;width:335.20px;height:1.20px;background:#24242e"></div><div class="a" style="left:23.60px;top:342.00px;width:4.80px;height:4.80px;border-radius:50%;background:#f0c060"></div><div class="a" style="left:33.20px;top:338.24px;font-size:12px;line-height:1;color:#e2e2ec;font-weight:normal;white-space:nowrap;">Pay-as-you-go credits</div><div class="a" style="left:-42.80px;width:400px;text-align:right;top:339.09px;font-size:11px;line-height:1;color:#8e8ca4;font-weight:normal;white-space:nowrap;">$30.37 / $42.50</div><div class="a" style="left:22.00px;top:360.00px;width:271.40px;height:4.80px;border-radius:2px;background:#292935"></div><div class="a" style="left:22.00px;top:360.00px;width:192.60px;height:4.80px;border-radius:2px;background:#f2bb62"></div><div class="a" style="left:-42.80px;width:400px;text-align:right;top:356.64px;font-size:12px;line-height:1;color:#a09eb4;font-weight:normal;white-space:nowrap;letter-spacing:-0.1px;"><span style="color:#ececf4">71%</span> used</div><div class="a" style="left:22.00px;top:382.60px;width:335.20px;height:49.00px;border-radius:7px;border:1.5px solid #262632;background:#16161f"></div><div class="a" style="left:30.60px;top:397.40px;width:4.80px;height:4.80px;border-radius:50%;background:#62d46e"></div><div class="a" style="left:40.00px;top:394.69px;font-size:11px;line-height:1;color:#f0f0f6;font-weight:bold;white-space:nowrap;letter-spacing:-0.3px;">Forecast · Weekly · all models</div><div class="a" style="left:30.60px;top:411.78px;font-size:11.6px;line-height:1;color:#7e7c94;font-weight:normal;white-space:nowrap;letter-spacing:-0.3px;">At <b style="color:#e8e8f0">0.81%/hour</b>, limit in <b style="color:#e8e8f0">4d 10h</b> · safe — resets before then</div><div class="a" style="left:22.00px;top:447.20px;width:335.20px;height:1.20px;background:#24242e"></div><div class="a" style="left:22.00px;top:460.06px;font-size:10.8px;line-height:1;color:#6e6c84;font-weight:normal;white-space:nowrap;letter-spacing:0.3px;">TREND · LAST 100 SAMPLES</div><svg class="a" style="left:0;top:0;width:384px;height:600px" viewBox="0 0 384 600"><defs><linearGradient id="cgB1" x1="0" y1="0" x2="0" y2="1"><stop offset="0" stop-color="#5b50b8" stop-opacity="0.6"/><stop offset="1" stop-color="#5b50b8" stop-opacity="0"/></linearGradient></defs><path d="M22.8 516.8 L49.6 514.8 L53.8 516.8 L128.4 512.6 L132.6 514.8 L183.6 511.6 L192.2 509.4 L195.4 502.0 L215.6 502.0 L217.8 519.0 L252.0 519.0 L258.2 514.8 L264.6 513.6 L267.8 507.2 L277.4 506.2 L280.6 499.8 L291.2 499.8 L294.4 520.0 L311.4 520.0 L315.8 516.8 L320.0 519.0 L337.0 519.0 L342.4 512.6 L356.2 512.6 L356.2 532.0 L22.8 532.0 Z" fill="url(#cgB1)"/><path d="M22.8 516.8 L49.6 514.8 L53.8 516.8 L128.4 512.6 L132.6 514.8 L183.6 511.6 L192.2 509.4 L195.4 502.0 L215.6 502.0 L217.8 519.0 L252.0 519.0 L258.2 514.8 L264.6 513.6 L267.8 507.2 L277.4 506.2 L280.6 499.8 L291.2 499.8 L294.4 520.0 L311.4 520.0 L315.8 516.8 L320.0 519.0 L337.0 519.0 L342.4 512.6 L356.2 512.6" fill="none" stroke="#6e62e0" stroke-width="2"/></svg><div class="a" style="left:22.00px;top:539.80px;width:335.20px;height:1.20px;background:#24242e"></div><div class="a" style="left:23.00px;top:553.60px;width:14.00px;height:10.00px;border:1.2px solid #c8c8d4;border-radius:1px"></div><div class="a" style="left:41.00px;top:554.41px;font-size:11.8px;line-height:1;color:#7e7c94;font-weight:normal;white-space:nowrap;letter-spacing:-0.3px;"><b style="color:#d0d0dc">Terminal scraping</b> — AnvilTerm reads /usage directly from</div><div class="a" style="left:22.00px;top:570.81px;font-size:11.8px;line-height:1;color:#7e7c94;font-weight:normal;white-space:nowrap;letter-spacing:-0.3px;">the CLI. No API calls. No rate limits.</div><div class="a" style="left:374.40px;top:375.20px;width:2.40px;height:78.80px;background:#3c6a48"></div></div></div><!--/THUMB1-->
  <div class="a ctitle" style="top:1163.6px">paste-1777329220108.png</div>
  <div class="a csize" style="top:1199px">0 B</div>
  <div class="a cbtn" style="left:2420.1px;top:1232.3px;width:82.7px"></div>
  <div class="a cbtxt" style="left:2420.1px;top:1240.9px;width:82.7px;">Path</div>
  <div class="a cbtn" style="left:2511.3px;top:1232.3px;width:77.3px"></div>
  <div class="a cbtxt" style="left:2511.3px;top:1240.9px;width:77.3px;">URL</div>
  <div class="a cbtn" style="left:2596.9px;top:1232.3px;width:91.7px"></div>
  <div class="a cbtxt" style="left:2596.9px;top:1240.9px;width:91.7px;">Copy</div>
  <div class="a cbtn" style="left:2697.3px;top:1232.3px;width:94.3px"></div>
  <div class="a cbtxt" style="left:2697.3px;top:1240.9px;width:94.3px;">Insert</div>
  <div class="a cbtn" style="left:2800px;top:1232.3px;width:51.8px"></div>
  <div class="a cbtxt" style="left:2800px;top:1240.9px;width:51.8px;color:#ef5b4d">X</div>
  <div class="a card" style="top:1306px"><div class="cimg"></div></div>
  <!--THUMB2--><div class="a" style="left:2602px;top:1307px;width:384px;height:600px;transform:scale(0.5);transform-origin:0 0"><div class="a" style="left:0;top:0;width:384px;height:600px;overflow:hidden;background:#0c0c13"><div class="a" style="left:0.00px;top:0.00px;width:384.00px;height:6.00px;background:#38383a"></div><div class="a" style="left:0.00px;top:6.00px;width:384.00px;height:37.00px;background:#111117"></div><div class="a" style="left:150.60px;top:14.20px;width:70.40px;height:23.40px;border-radius:12px;border:1px solid #262630;background:#16161e"></div><div class="a" style="left:157.00px;top:17.20px;width:22.40px;height:17.60px;border-radius:5px;background:linear-gradient(135deg,#6a80e8,#d07a8e)"></div><div class="a" style="left:164.80px;top:22.60px;width:6.80px;height:6.80px;border-radius:50%;background:#fff"></div><div class="a" style="left:184.80px;top:23.49px;font-size:11px;line-height:1;color:#f2f2f7;font-weight:bold;white-space:nowrap;">27%</div><div class="a" style="left:234.80px;top:14.20px;width:64.00px;height:23.40px;border-radius:12px;border:1px solid #262630;background:#16161e"></div><div class="a" style="left:241.20px;top:18.00px;width:16.00px;height:16.00px;border-radius:3px;background:#f0f0f6"></div><div class="a" style="left:242.80px;top:19.60px;width:12.80px;height:12.80px;border-radius:50%;background:linear-gradient(#8aa0f4,#4060f0)"></div><div class="a" style="left:262.60px;top:23.49px;font-size:11px;line-height:1;color:#f2f2f7;font-weight:bold;white-space:nowrap;">27%</div><div class="a" style="left:311.40px;top:14.20px;width:67.20px;height:23.40px;border-radius:12px;border:1px solid #262630;background:#16161e"></div><svg class="a" style="left:316px;top:20px;width:22px;height:14px" viewBox="6 5 36 24" fill="#e9a86c"><rect x="16" y="6" width="4" height="3"/><rect x="27" y="6" width="3" height="3"/><rect x="13" y="11" width="20" height="3"/><rect x="11" y="14" width="25" height="2"/><rect x="6" y="16" width="35" height="4"/><rect x="11" y="20" width="25" height="2"/><rect x="11" y="22" width="3" height="6"/><rect x="16" y="22" width="4" height="6"/><rect x="27" y="22" width="3" height="6"/><rect x="32" y="22" width="4" height="6"/></svg><div class="a" style="left:343.40px;top:23.49px;font-size:11px;line-height:1;color:#f2f2f7;font-weight:bold;white-space:nowrap;">27%</div><div class="a" style="left:4.80px;top:44.00px;width:373.80px;height:550.60px;background:#13131b;border:1.5px solid #2a2a36;border-radius:12px;box-shadow:0 4px 12px rgba(0,0,0,0.5)"></div><div class="a" style="left:22.80px;top:63.06px;font-size:13.4px;line-height:1;color:#f2f2f7;font-weight:bold;white-space:nowrap;letter-spacing:-0.3px;">Claude usage</div><div class="a" style="left:117.60px;top:63.20px;width:78.80px;height:13.80px;border-radius:4px;background:#252534"></div><div class="a" style="left:123.00px;top:65.61px;font-size:9.2px;line-height:1;color:#8e8ca4;font-weight:normal;white-space:nowrap;letter-spacing:0.8px;">COMMUNITY</div><div class="a" style="left:250.80px;top:64.70px;font-size:12.4px;line-height:1;color:#aeacc0;font-weight:normal;white-space:nowrap;">/usage</div><div class="a" style="left:311.40px;top:63.69px;font-size:11px;line-height:1;color:#8c8aa2;font-weight:bold;white-space:nowrap;">···</div><div class="a" style="left:340.40px;top:66.40px;width:6.80px;height:6.80px;border-radius:50%;border:1px solid #8c8aa2"></div><div class="a" style="left:21.80px;top:89.80px;width:80.60px;height:22.40px;border-radius:12px;background:linear-gradient(90deg,#8a86ee,#76d0f0)"></div><div class="a" style="left:34.00px;top:96.69px;font-size:11px;line-height:1;color:#fff;font-weight:bold;white-space:nowrap;">Max · 20x</div><div class="a" style="left:111.20px;top:96.52px;font-size:11.2px;line-height:1;color:#8c8aa2;font-weight:normal;white-space:nowrap;">Opus 4.7 · medium</div><div class="a" style="left:22.00px;top:122.40px;width:335.20px;height:1.20px;background:#24242e"></div><div class="a" style="left:23.60px;top:142.40px;width:4.80px;height:4.80px;border-radius:50%;background:#62d46e"></div><div class="a" style="left:33.20px;top:138.64px;font-size:12px;line-height:1;color:#e2e2ec;font-weight:normal;white-space:nowrap;letter-spacing:-0.1px;">5-hour session</div><div class="a" style="left:22.00px;top:160.60px;width:271.40px;height:4.80px;border-radius:2px;background:#292935"></div><div class="a" style="left:22.00px;top:160.60px;width:74.00px;height:4.80px;border-radius:2px;background:#72d87c"></div><div class="a" style="left:-42.80px;width:400px;text-align:right;top:157.24px;font-size:12px;line-height:1;color:#a09eb4;font-weight:normal;white-space:nowrap;letter-spacing:-0.1px;"><span style="color:#ececf4">27%</span> used</div><div class="a" style="left:-42.80px;width:400px;text-align:right;top:176.09px;font-size:11px;line-height:1;color:#8e8ca4;font-weight:normal;white-space:nowrap;letter-spacing:-0.3px;">73% left</div><div class="a" style="left:23.60px;top:203.60px;width:4.80px;height:4.80px;border-radius:50%;background:#62d46e"></div><div class="a" style="left:33.20px;top:199.84px;font-size:12px;line-height:1;color:#e2e2ec;font-weight:normal;white-space:nowrap;letter-spacing:-0.1px;">Weekly · all models</div><div class="a" style="left:22.00px;top:221.60px;width:271.40px;height:4.80px;border-radius:2px;background:#292935"></div><div class="a" style="left:22.00px;top:221.60px;width:41.40px;height:4.80px;border-radius:2px;background:#72d87c"></div><div class="a" style="left:-42.80px;width:400px;text-align:right;top:218.24px;font-size:12px;line-height:1;color:#a09eb4;font-weight:normal;white-space:nowrap;letter-spacing:-0.1px;"><span style="color:#ececf4">15%</span> used</div><div class="a" style="left:-42.80px;width:400px;text-align:right;top:237.09px;font-size:11px;line-height:1;color:#8e8ca4;font-weight:normal;white-space:nowrap;letter-spacing:-0.3px;">85% left</div><div class="a" style="left:23.60px;top:266.40px;width:4.80px;height:4.80px;border-radius:50%;background:#62d46e"></div><div class="a" style="left:33.20px;top:262.64px;font-size:12px;line-height:1;color:#e2e2ec;font-weight:normal;white-space:nowrap;letter-spacing:-0.1px;">Weekly · Sonnet</div><div class="a" style="left:22.00px;top:283.40px;width:271.40px;height:4.80px;border-radius:2px;background:#292935"></div><div class="a" style="left:-42.80px;width:400px;text-align:right;top:280.04px;font-size:12px;line-height:1;color:#a09eb4;font-weight:normal;white-space:nowrap;letter-spacing:-0.1px;"><span style="color:#ececf4">0.0%</span> used</div><div class="a" style="left:-42.80px;width:400px;text-align:right;top:298.89px;font-size:11px;line-height:1;color:#8e8ca4;font-weight:normal;white-space:nowrap;letter-spacing:-0.3px;">100% left</div><div class="a" style="left:22.00px;top:324.00px;width:335.20px;height:1.20px;background:#24242e"></div><div class="a" style="left:23.60px;top:342.00px;width:4.80px;height:4.80px;border-radius:50%;background:#f0c060"></div><div class="a" style="left:33.20px;top:338.24px;font-size:12px;line-height:1;color:#e2e2ec;font-weight:normal;white-space:nowrap;">Pay-as-you-go credits</div><div class="a" style="left:-42.80px;width:400px;text-align:right;top:339.09px;font-size:11px;line-height:1;color:#8e8ca4;font-weight:normal;white-space:nowrap;">$30.37 / $42.50</div><div class="a" style="left:22.00px;top:360.00px;width:271.40px;height:4.80px;border-radius:2px;background:#292935"></div><div class="a" style="left:22.00px;top:360.00px;width:192.60px;height:4.80px;border-radius:2px;background:#f2bb62"></div><div class="a" style="left:-42.80px;width:400px;text-align:right;top:356.64px;font-size:12px;line-height:1;color:#a09eb4;font-weight:normal;white-space:nowrap;letter-spacing:-0.1px;"><span style="color:#ececf4">71%</span> used</div><div class="a" style="left:22.00px;top:382.60px;width:335.20px;height:49.00px;border-radius:7px;border:1.5px solid #262632;background:#16161f"></div><div class="a" style="left:30.60px;top:397.40px;width:4.80px;height:4.80px;border-radius:50%;background:#62d46e"></div><div class="a" style="left:40.00px;top:394.69px;font-size:11px;line-height:1;color:#f0f0f6;font-weight:bold;white-space:nowrap;letter-spacing:-0.3px;">Forecast · Weekly · all models</div><div class="a" style="left:30.60px;top:411.78px;font-size:11.6px;line-height:1;color:#7e7c94;font-weight:normal;white-space:nowrap;letter-spacing:-0.3px;">At <b style="color:#e8e8f0">0.81%/hour</b>, limit in <b style="color:#e8e8f0">4d 10h</b> · safe — resets before then</div><div class="a" style="left:22.00px;top:447.20px;width:335.20px;height:1.20px;background:#24242e"></div><div class="a" style="left:22.00px;top:460.06px;font-size:10.8px;line-height:1;color:#6e6c84;font-weight:normal;white-space:nowrap;letter-spacing:0.3px;">TREND · LAST 100 SAMPLES</div><svg class="a" style="left:0;top:0;width:384px;height:600px" viewBox="0 0 384 600"><defs><linearGradient id="cgB2" x1="0" y1="0" x2="0" y2="1"><stop offset="0" stop-color="#5b50b8" stop-opacity="0.6"/><stop offset="1" stop-color="#5b50b8" stop-opacity="0"/></linearGradient></defs><path d="M22.8 516.8 L49.6 514.8 L53.8 516.8 L128.4 512.6 L132.6 514.8 L183.6 511.6 L192.2 509.4 L195.4 502.0 L215.6 502.0 L217.8 519.0 L252.0 519.0 L258.2 514.8 L264.6 513.6 L267.8 507.2 L277.4 506.2 L280.6 499.8 L291.2 499.8 L294.4 520.0 L311.4 520.0 L315.8 516.8 L320.0 519.0 L337.0 519.0 L342.4 512.6 L356.2 512.6 L356.2 532.0 L22.8 532.0 Z" fill="url(#cgB2)"/><path d="M22.8 516.8 L49.6 514.8 L53.8 516.8 L128.4 512.6 L132.6 514.8 L183.6 511.6 L192.2 509.4 L195.4 502.0 L215.6 502.0 L217.8 519.0 L252.0 519.0 L258.2 514.8 L264.6 513.6 L267.8 507.2 L277.4 506.2 L280.6 499.8 L291.2 499.8 L294.4 520.0 L311.4 520.0 L315.8 516.8 L320.0 519.0 L337.0 519.0 L342.4 512.6 L356.2 512.6" fill="none" stroke="#6e62e0" stroke-width="2"/></svg><div class="a" style="left:22.00px;top:539.80px;width:335.20px;height:1.20px;background:#24242e"></div><div class="a" style="left:23.00px;top:553.60px;width:14.00px;height:10.00px;border:1.2px solid #c8c8d4;border-radius:1px"></div><div class="a" style="left:41.00px;top:554.41px;font-size:11.8px;line-height:1;color:#7e7c94;font-weight:normal;white-space:nowrap;letter-spacing:-0.3px;"><b style="color:#d0d0dc">Terminal scraping</b> — AnvilTerm reads /usage directly from</div><div class="a" style="left:22.00px;top:570.81px;font-size:11.8px;line-height:1;color:#7e7c94;font-weight:normal;white-space:nowrap;letter-spacing:-0.3px;">the CLI. No API calls. No rate limits.</div><div class="a" style="left:374.40px;top:375.20px;width:2.40px;height:78.80px;background:#3c6a48"></div></div></div><!--/THUMB2-->
  <div class="a ctitle" style="top:1625.6px">paste-1777329220108.png</div>
  <div class="a csize" style="top:1661px">446.2 KB</div>
  <div class="a cbtn" style="left:2420.1px;top:1694.3px;width:82.7px"></div>
  <div class="a cbtxt" style="left:2420.1px;top:1702.9px;width:82.7px;">Path</div>
  <div class="a cbtn" style="left:2511.3px;top:1694.3px;width:77.3px"></div>
  <div class="a cbtxt" style="left:2511.3px;top:1702.9px;width:77.3px;">URL</div>
  <div class="a cbtn" style="left:2596.9px;top:1694.3px;width:91.7px"></div>
  <div class="a cbtxt" style="left:2596.9px;top:1702.9px;width:91.7px;">Copy</div>
  <div class="a cbtn" style="left:2697.3px;top:1694.3px;width:94.3px"></div>
  <div class="a cbtxt" style="left:2697.3px;top:1702.9px;width:94.3px;">Insert</div>
  <div class="a cbtn" style="left:2800px;top:1694.3px;width:51.8px"></div>
  <div class="a cbtxt" style="left:2800px;top:1702.9px;width:51.8px;color:#ef5b4d">X</div>
  <div class="a card" style="top:1768px"><div class="cimg"></div></div>
  <!--THUMB3--><div class="a" style="left:2602px;top:1769px;width:384px;height:600px;transform:scale(0.5);transform-origin:0 0"><div class="a" style="left:0;top:0;width:384px;height:600px;overflow:hidden;background:#0c0c13"><div class="a" style="left:0.00px;top:0.00px;width:384.00px;height:6.00px;background:#38383a"></div><div class="a" style="left:0.00px;top:6.00px;width:384.00px;height:37.00px;background:#111117"></div><div class="a" style="left:150.60px;top:14.20px;width:70.40px;height:23.40px;border-radius:12px;border:1px solid #262630;background:#16161e"></div><div class="a" style="left:157.00px;top:17.20px;width:22.40px;height:17.60px;border-radius:5px;background:linear-gradient(135deg,#6a80e8,#d07a8e)"></div><div class="a" style="left:164.80px;top:22.60px;width:6.80px;height:6.80px;border-radius:50%;background:#fff"></div><div class="a" style="left:184.80px;top:23.49px;font-size:11px;line-height:1;color:#f2f2f7;font-weight:bold;white-space:nowrap;">27%</div><div class="a" style="left:234.80px;top:14.20px;width:64.00px;height:23.40px;border-radius:12px;border:1px solid #262630;background:#16161e"></div><div class="a" style="left:241.20px;top:18.00px;width:16.00px;height:16.00px;border-radius:3px;background:#f0f0f6"></div><div class="a" style="left:242.80px;top:19.60px;width:12.80px;height:12.80px;border-radius:50%;background:linear-gradient(#8aa0f4,#4060f0)"></div><div class="a" style="left:262.60px;top:23.49px;font-size:11px;line-height:1;color:#f2f2f7;font-weight:bold;white-space:nowrap;">27%</div><div class="a" style="left:311.40px;top:14.20px;width:67.20px;height:23.40px;border-radius:12px;border:1px solid #262630;background:#16161e"></div><svg class="a" style="left:316px;top:20px;width:22px;height:14px" viewBox="6 5 36 24" fill="#e9a86c"><rect x="16" y="6" width="4" height="3"/><rect x="27" y="6" width="3" height="3"/><rect x="13" y="11" width="20" height="3"/><rect x="11" y="14" width="25" height="2"/><rect x="6" y="16" width="35" height="4"/><rect x="11" y="20" width="25" height="2"/><rect x="11" y="22" width="3" height="6"/><rect x="16" y="22" width="4" height="6"/><rect x="27" y="22" width="3" height="6"/><rect x="32" y="22" width="4" height="6"/></svg><div class="a" style="left:343.40px;top:23.49px;font-size:11px;line-height:1;color:#f2f2f7;font-weight:bold;white-space:nowrap;">27%</div><div class="a" style="left:4.80px;top:44.00px;width:373.80px;height:550.60px;background:#13131b;border:1.5px solid #2a2a36;border-radius:12px;box-shadow:0 4px 12px rgba(0,0,0,0.5)"></div><div class="a" style="left:22.80px;top:63.06px;font-size:13.4px;line-height:1;color:#f2f2f7;font-weight:bold;white-space:nowrap;letter-spacing:-0.3px;">Claude usage</div><div class="a" style="left:117.60px;top:63.20px;width:78.80px;height:13.80px;border-radius:4px;background:#252534"></div><div class="a" style="left:123.00px;top:65.61px;font-size:9.2px;line-height:1;color:#8e8ca4;font-weight:normal;white-space:nowrap;letter-spacing:0.8px;">COMMUNITY</div><div class="a" style="left:250.80px;top:64.70px;font-size:12.4px;line-height:1;color:#aeacc0;font-weight:normal;white-space:nowrap;">/usage</div><div class="a" style="left:311.40px;top:63.69px;font-size:11px;line-height:1;color:#8c8aa2;font-weight:bold;white-space:nowrap;">···</div><div class="a" style="left:340.40px;top:66.40px;width:6.80px;height:6.80px;border-radius:50%;border:1px solid #8c8aa2"></div><div class="a" style="left:21.80px;top:89.80px;width:80.60px;height:22.40px;border-radius:12px;background:linear-gradient(90deg,#8a86ee,#76d0f0)"></div><div class="a" style="left:34.00px;top:96.69px;font-size:11px;line-height:1;color:#fff;font-weight:bold;white-space:nowrap;">Max · 20x</div><div class="a" style="left:111.20px;top:96.52px;font-size:11.2px;line-height:1;color:#8c8aa2;font-weight:normal;white-space:nowrap;">Opus 4.7 · medium</div><div class="a" style="left:22.00px;top:122.40px;width:335.20px;height:1.20px;background:#24242e"></div><div class="a" style="left:23.60px;top:142.40px;width:4.80px;height:4.80px;border-radius:50%;background:#62d46e"></div><div class="a" style="left:33.20px;top:138.64px;font-size:12px;line-height:1;color:#e2e2ec;font-weight:normal;white-space:nowrap;letter-spacing:-0.1px;">5-hour session</div><div class="a" style="left:22.00px;top:160.60px;width:271.40px;height:4.80px;border-radius:2px;background:#292935"></div><div class="a" style="left:22.00px;top:160.60px;width:74.00px;height:4.80px;border-radius:2px;background:#72d87c"></div><div class="a" style="left:-42.80px;width:400px;text-align:right;top:157.24px;font-size:12px;line-height:1;color:#a09eb4;font-weight:normal;white-space:nowrap;letter-spacing:-0.1px;"><span style="color:#ececf4">27%</span> used</div><div class="a" style="left:-42.80px;width:400px;text-align:right;top:176.09px;font-size:11px;line-height:1;color:#8e8ca4;font-weight:normal;white-space:nowrap;letter-spacing:-0.3px;">73% left</div><div class="a" style="left:23.60px;top:203.60px;width:4.80px;height:4.80px;border-radius:50%;background:#62d46e"></div><div class="a" style="left:33.20px;top:199.84px;font-size:12px;line-height:1;color:#e2e2ec;font-weight:normal;white-space:nowrap;letter-spacing:-0.1px;">Weekly · all models</div><div class="a" style="left:22.00px;top:221.60px;width:271.40px;height:4.80px;border-radius:2px;background:#292935"></div><div class="a" style="left:22.00px;top:221.60px;width:41.40px;height:4.80px;border-radius:2px;background:#72d87c"></div><div class="a" style="left:-42.80px;width:400px;text-align:right;top:218.24px;font-size:12px;line-height:1;color:#a09eb4;font-weight:normal;white-space:nowrap;letter-spacing:-0.1px;"><span style="color:#ececf4">15%</span> used</div><div class="a" style="left:-42.80px;width:400px;text-align:right;top:237.09px;font-size:11px;line-height:1;color:#8e8ca4;font-weight:normal;white-space:nowrap;letter-spacing:-0.3px;">85% left</div><div class="a" style="left:23.60px;top:266.40px;width:4.80px;height:4.80px;border-radius:50%;background:#62d46e"></div><div class="a" style="left:33.20px;top:262.64px;font-size:12px;line-height:1;color:#e2e2ec;font-weight:normal;white-space:nowrap;letter-spacing:-0.1px;">Weekly · Sonnet</div><div class="a" style="left:22.00px;top:283.40px;width:271.40px;height:4.80px;border-radius:2px;background:#292935"></div><div class="a" style="left:-42.80px;width:400px;text-align:right;top:280.04px;font-size:12px;line-height:1;color:#a09eb4;font-weight:normal;white-space:nowrap;letter-spacing:-0.1px;"><span style="color:#ececf4">0.0%</span> used</div><div class="a" style="left:-42.80px;width:400px;text-align:right;top:298.89px;font-size:11px;line-height:1;color:#8e8ca4;font-weight:normal;white-space:nowrap;letter-spacing:-0.3px;">100% left</div><div class="a" style="left:22.00px;top:324.00px;width:335.20px;height:1.20px;background:#24242e"></div><div class="a" style="left:23.60px;top:342.00px;width:4.80px;height:4.80px;border-radius:50%;background:#f0c060"></div><div class="a" style="left:33.20px;top:338.24px;font-size:12px;line-height:1;color:#e2e2ec;font-weight:normal;white-space:nowrap;">Pay-as-you-go credits</div><div class="a" style="left:-42.80px;width:400px;text-align:right;top:339.09px;font-size:11px;line-height:1;color:#8e8ca4;font-weight:normal;white-space:nowrap;">$30.37 / $42.50</div><div class="a" style="left:22.00px;top:360.00px;width:271.40px;height:4.80px;border-radius:2px;background:#292935"></div><div class="a" style="left:22.00px;top:360.00px;width:192.60px;height:4.80px;border-radius:2px;background:#f2bb62"></div><div class="a" style="left:-42.80px;width:400px;text-align:right;top:356.64px;font-size:12px;line-height:1;color:#a09eb4;font-weight:normal;white-space:nowrap;letter-spacing:-0.1px;"><span style="color:#ececf4">71%</span> used</div><div class="a" style="left:22.00px;top:382.60px;width:335.20px;height:49.00px;border-radius:7px;border:1.5px solid #262632;background:#16161f"></div><div class="a" style="left:30.60px;top:397.40px;width:4.80px;height:4.80px;border-radius:50%;background:#62d46e"></div><div class="a" style="left:40.00px;top:394.69px;font-size:11px;line-height:1;color:#f0f0f6;font-weight:bold;white-space:nowrap;letter-spacing:-0.3px;">Forecast · Weekly · all models</div><div class="a" style="left:30.60px;top:411.78px;font-size:11.6px;line-height:1;color:#7e7c94;font-weight:normal;white-space:nowrap;letter-spacing:-0.3px;">At <b style="color:#e8e8f0">0.81%/hour</b>, limit in <b style="color:#e8e8f0">4d 10h</b> · safe — resets before then</div><div class="a" style="left:22.00px;top:447.20px;width:335.20px;height:1.20px;background:#24242e"></div><div class="a" style="left:22.00px;top:460.06px;font-size:10.8px;line-height:1;color:#6e6c84;font-weight:normal;white-space:nowrap;letter-spacing:0.3px;">TREND · LAST 100 SAMPLES</div><svg class="a" style="left:0;top:0;width:384px;height:600px" viewBox="0 0 384 600"><defs><linearGradient id="cgB3" x1="0" y1="0" x2="0" y2="1"><stop offset="0" stop-color="#5b50b8" stop-opacity="0.6"/><stop offset="1" stop-color="#5b50b8" stop-opacity="0"/></linearGradient></defs><path d="M22.8 516.8 L49.6 514.8 L53.8 516.8 L128.4 512.6 L132.6 514.8 L183.6 511.6 L192.2 509.4 L195.4 502.0 L215.6 502.0 L217.8 519.0 L252.0 519.0 L258.2 514.8 L264.6 513.6 L267.8 507.2 L277.4 506.2 L280.6 499.8 L291.2 499.8 L294.4 520.0 L311.4 520.0 L315.8 516.8 L320.0 519.0 L337.0 519.0 L342.4 512.6 L356.2 512.6 L356.2 532.0 L22.8 532.0 Z" fill="url(#cgB3)"/><path d="M22.8 516.8 L49.6 514.8 L53.8 516.8 L128.4 512.6 L132.6 514.8 L183.6 511.6 L192.2 509.4 L195.4 502.0 L215.6 502.0 L217.8 519.0 L252.0 519.0 L258.2 514.8 L264.6 513.6 L267.8 507.2 L277.4 506.2 L280.6 499.8 L291.2 499.8 L294.4 520.0 L311.4 520.0 L315.8 516.8 L320.0 519.0 L337.0 519.0 L342.4 512.6 L356.2 512.6" fill="none" stroke="#6e62e0" stroke-width="2"/></svg><div class="a" style="left:22.00px;top:539.80px;width:335.20px;height:1.20px;background:#24242e"></div><div class="a" style="left:23.00px;top:553.60px;width:14.00px;height:10.00px;border:1.2px solid #c8c8d4;border-radius:1px"></div><div class="a" style="left:41.00px;top:554.41px;font-size:11.8px;line-height:1;color:#7e7c94;font-weight:normal;white-space:nowrap;letter-spacing:-0.3px;"><b style="color:#d0d0dc">Terminal scraping</b> — AnvilTerm reads /usage directly from</div><div class="a" style="left:22.00px;top:570.81px;font-size:11.8px;line-height:1;color:#7e7c94;font-weight:normal;white-space:nowrap;letter-spacing:-0.3px;">the CLI. No API calls. No rate limits.</div><div class="a" style="left:374.40px;top:375.20px;width:2.40px;height:78.80px;background:#3c6a48"></div></div></div><!--/THUMB3-->
  <div class="a ctitle" style="top:2087.6px">paste-1777329220108.png</div>
  <div class="a csize" style="top:2123px">446.2 KB</div>
  <div class="a cbtn" style="left:2420.1px;top:2156.3px;width:82.7px"></div>
  <div class="a cbtxt" style="left:2420.1px;top:2164.9px;width:82.7px;">Path</div>
  <div class="a cbtn" style="left:2511.3px;top:2156.3px;width:77.3px"></div>
  <div class="a cbtxt" style="left:2511.3px;top:2164.9px;width:77.3px;">URL</div>
  <div class="a cbtn" style="left:2596.9px;top:2156.3px;width:91.7px"></div>
  <div class="a cbtxt" style="left:2596.9px;top:2164.9px;width:91.7px;">Copy</div>
  <div class="a cbtn" style="left:2697.3px;top:2156.3px;width:94.3px"></div>
  <div class="a cbtxt" style="left:2697.3px;top:2164.9px;width:94.3px;">Insert</div>
  <div class="a cbtn" style="left:2800px;top:2156.3px;width:51.8px"></div>
  <div class="a cbtxt" style="left:2800px;top:2164.9px;width:51.8px;color:#ef5b4d">X</div>
<!--/MEDIA-->
  <!--POPUP-->
<div class="a" style="left:1280.5px;top:72.5px;width:318px;height:549px;border-radius:22px;background:#1b1b2d;border:1.5px solid #35354c;box-shadow:0 10px 30px rgba(0,0,0,0.45)"></div>
  <div class="a" style="left:1298px;top:90px;width:282px;height:480px"><div class="a" style="left:0;top:0;width:282px;height:480px;overflow:hidden;border-radius:7px 7px 8px 8px;background:#0c0c13"><div class="a" style="left:0.00px;top:0.00px;width:282.00px;height:7.50px;background:#3a3a36"></div><div class="a" style="left:0.00px;top:7.50px;width:282.00px;height:28.00px;background:#121218;border-bottom:1px solid #2a2a33"></div><div class="a" style="left:65.70px;top:15.90px;width:48.00px;height:14.80px;border-radius:8px;border:1px solid #24242e;background:#15151d"></div><div class="a" style="left:70.80px;top:17.20px;width:14.80px;height:11.80px;border-radius:4px;background:linear-gradient(135deg,#6a80e8,#d07a8e)"></div><svg class="a" style="left:74.7px;top:19.6px;width:7px;height:7px" viewBox="0 0 20 20"><path d="M10 1C10.8 7 13 9.2 19 10 13 10.8 10.8 13 10 19 9.2 13 7 10.8 1 10 7 9.2 9.2 7 10 1Z" fill="#fff"/></svg><div class="a" style="left:94.00px;top:19.53px;font-size:8px;line-height:1;color:#f2f2f7;font-weight:bold;white-space:nowrap;">7%</div><div class="a" style="left:122.30px;top:15.90px;width:43.40px;height:14.80px;border-radius:8px;border:1px solid #24242e;background:#15151d"></div><div class="a" style="left:127.00px;top:17.60px;width:10.80px;height:10.80px;border-radius:2.5px;background:#f0f0f6"></div><div class="a" style="left:128.20px;top:18.80px;width:8.40px;height:8.40px;border-radius:50%;background:linear-gradient(#8aa0f4,#4060f0)"></div><div class="a" style="left:141.50px;top:19.53px;font-size:8px;line-height:1;color:#f2f2f7;font-weight:bold;white-space:nowrap;">27%</div><div class="a" style="left:174.30px;top:15.90px;width:46.00px;height:14.80px;border-radius:8px;border:1px solid #3a3a46;background:#1e1e28"></div><svg class="a" style="left:178px;top:18.5px;width:16px;height:10px" viewBox="6 5 36 24" fill="#e9a86c"><rect x="16" y="6" width="4" height="3"/><rect x="27" y="6" width="3" height="3"/><rect x="13" y="11" width="20" height="3"/><rect x="11" y="14" width="25" height="2"/><rect x="6" y="16" width="35" height="4"/><rect x="11" y="20" width="25" height="2"/><rect x="11" y="22" width="3" height="6"/><rect x="16" y="22" width="4" height="6"/><rect x="27" y="22" width="3" height="6"/><rect x="32" y="22" width="4" height="6"/></svg><div class="a" style="left:197.00px;top:19.53px;font-size:8px;line-height:1;color:#f2f2f7;font-weight:bold;white-space:nowrap;">13%</div><div class="a" style="left:229.00px;top:21.80px;width:3.60px;height:3.60px;border-radius:50%;background:#5fd46a"></div><div class="a" style="left:236.50px;top:19.52px;font-size:8.6px;line-height:1;color:#8f8da8;font-weight:normal;white-space:nowrap;">Connected</div><div class="a" style="left:218.00px;top:36.40px;width:64.00px;height:29.00px;background:#0b0b10;border-bottom:1px solid #1e1e26"></div><div class="a" style="left:220.30px;top:91.60px;width:48.60px;height:12.80px;background:#e2e2ea"></div><div class="a" style="left:222.00px;top:93.00px;font-size:10.4px;line-height:1;color:#222;font-weight:normal;white-space:nowrap;font-family:'Liberation Mono',monospace">37:35</div><div class="a" style="left:256.00px;top:93.50px;width:5.00px;height:8.00px;border:1px solid #222"></div><div class="a" style="left:276.50px;top:66.00px;width:5.50px;height:414.00px;background:#17171e"></div><div class="a" style="left:-12.00px;top:36.40px;width:230.60px;height:372.10px;background:#14141c;border:1px solid #2c2c38;border-radius:0 0 10px 10px;box-shadow:4px 6px 18px rgba(0,0,0,0.55)"></div><div class="a" style="left:0.00px;top:48.13px;font-size:9.3px;line-height:1;color:#f2f2f7;font-weight:bold;white-space:nowrap;letter-spacing:-0.3px;">de usage</div><div class="a" style="left:44.20px;top:47.90px;width:52.50px;height:10.40px;border-radius:3px;background:#24243a"></div><div class="a" style="left:47.50px;top:49.84px;font-size:6.8px;line-height:1;color:#9a98b0;font-weight:normal;white-space:nowrap;letter-spacing:0.5px;">COMMUNITY</div><div class="a" style="left:133.80px;top:49.05px;font-size:8.8px;line-height:1;color:#a0a0b2;font-weight:normal;white-space:nowrap;letter-spacing:-0.2px;">/usage</div><div class="a" style="left:174.50px;top:48.23px;font-size:8px;line-height:1;color:#7b6cf0;font-weight:bold;white-space:nowrap;">···</div><div class="a" style="left:195.20px;top:50.80px;width:4.80px;height:4.80px;border-radius:50%;border:1px solid #8c8aa2"></div><div class="a" style="left:-10.00px;top:66.80px;width:43.00px;height:14.50px;border-radius:7.5px;background:linear-gradient(90deg,#8a8cf0,#78d2f2)"></div><div class="a" style="left:1.00px;top:70.36px;font-size:8.2px;line-height:1;color:#fff;font-weight:bold;white-space:nowrap;letter-spacing:-0.2px;">x · 20x</div><div class="a" style="left:39.10px;top:70.13px;font-size:8.0px;line-height:1;color:#8c8aa2;font-weight:normal;white-space:nowrap;letter-spacing:-0.25px;">Opus 4.7 · medium</div><div class="a" style="left:0.00px;top:88.30px;width:205.50px;height:1.00px;background:#23232d"></div><div class="a" style="left:0.00px;top:100.05px;font-size:8.8px;line-height:1;color:#dcdce6;font-weight:normal;white-space:nowrap;letter-spacing:-0.25px;">hour session</div><div class="a" style="left:-194.50px;width:400px;text-align:right;top:100.90px;font-size:7.8px;line-height:1;color:#8c8aa2;font-weight:normal;white-space:nowrap;letter-spacing:-0.2px;">resets 4h 31m</div><div class="a" style="left:-10.00px;top:113.80px;width:171.60px;height:3.60px;border-radius:2px;background:#282834"></div><div class="a" style="left:-194.50px;width:400px;text-align:right;top:113.09px;font-size:8.4px;line-height:1;color:#8c8aa2;font-weight:normal;white-space:nowrap;letter-spacing:-0.25px;"><b style="color:#f2f2f7">10%</b> used</div><div class="a" style="left:-194.50px;width:400px;text-align:right;top:125.40px;font-size:7.8px;line-height:1;color:#8c8aa2;font-weight:normal;white-space:nowrap;letter-spacing:-0.3px;">90% left · at Apr 28 at 4:10 AM</div><div class="a" style="left:0.00px;top:141.05px;font-size:8.8px;line-height:1;color:#dcdce6;font-weight:normal;white-space:nowrap;letter-spacing:-0.25px;">eekly · all models</div><div class="a" style="left:-194.50px;width:400px;text-align:right;top:141.90px;font-size:7.8px;line-height:1;color:#8c8aa2;font-weight:normal;white-space:nowrap;letter-spacing:-0.2px;">resets 6d 2h</div><div class="a" style="left:-10.00px;top:155.80px;width:171.60px;height:3.60px;border-radius:2px;background:#282834"></div><div class="a" style="left:-10.00px;top:155.80px;width:13.00px;height:3.60px;border-radius:2px;background:#6fd67a"></div><div class="a" style="left:-194.50px;width:400px;text-align:right;top:155.09px;font-size:8.4px;line-height:1;color:#8c8aa2;font-weight:normal;white-space:nowrap;letter-spacing:-0.25px;"><b style="color:#f2f2f7">13%</b> used</div><div class="a" style="left:-194.50px;width:400px;text-align:right;top:167.40px;font-size:7.8px;line-height:1;color:#8c8aa2;font-weight:normal;white-space:nowrap;letter-spacing:-0.3px;">87% left · at May 4 at 2:00 AM</div><div class="a" style="left:0.00px;top:182.55px;font-size:8.8px;line-height:1;color:#dcdce6;font-weight:normal;white-space:nowrap;letter-spacing:-0.25px;">eekly · Sonnet</div><div class="a" style="left:-194.50px;width:400px;text-align:right;top:183.40px;font-size:7.8px;line-height:1;color:#8c8aa2;font-weight:normal;white-space:nowrap;letter-spacing:-0.2px;">resets 6d 2h</div><div class="a" style="left:-10.00px;top:197.80px;width:171.60px;height:3.60px;border-radius:2px;background:#282834"></div><div class="a" style="left:-194.50px;width:400px;text-align:right;top:197.09px;font-size:8.4px;line-height:1;color:#8c8aa2;font-weight:normal;white-space:nowrap;letter-spacing:-0.25px;"><b style="color:#f2f2f7">0.0%</b> used</div><div class="a" style="left:-194.50px;width:400px;text-align:right;top:209.40px;font-size:7.8px;line-height:1;color:#8c8aa2;font-weight:normal;white-space:nowrap;letter-spacing:-0.3px;">100% left · at May 4 at 2:00 AM</div><div class="a" style="left:0.00px;top:225.40px;width:205.50px;height:1.00px;background:#23232d"></div><div class="a" style="left:0.00px;top:234.55px;font-size:8.8px;line-height:1;color:#dcdce6;font-weight:normal;white-space:nowrap;letter-spacing:-0.25px;">y-as-you-go credits</div><div class="a" style="left:-194.50px;width:400px;text-align:right;top:235.40px;font-size:7.8px;line-height:1;color:#8c8aa2;font-weight:normal;white-space:nowrap;letter-spacing:-0.2px;">€30.37 / €42.50</div><div class="a" style="left:-10.00px;top:250.00px;width:171.20px;height:3.00px;border-radius:2px;background:#262630"></div><div class="a" style="left:-10.00px;top:250.00px;width:119.80px;height:3.00px;border-radius:2px;background:#f0b860"></div><div class="a" style="left:-194.50px;width:400px;text-align:right;top:247.39px;font-size:8.4px;line-height:1;color:#8c8aa2;font-weight:normal;white-space:nowrap;letter-spacing:-0.25px;"><b style="color:#f2f2f7">71%</b> used</div><div class="a" style="left:-10.00px;top:264.50px;width:214.40px;height:34.00px;border-radius:6px;border:1px solid #2a2a36;background:#16161f"></div><div class="a" style="left:-1.50px;top:271.71px;font-size:9.2px;line-height:1;color:#f2f2f7;font-weight:bold;white-space:nowrap;letter-spacing:-0.2px;">orecast · Weekly · all models</div><div class="a" style="left:-1.50px;top:283.39px;font-size:8.4px;line-height:1;color:#8c8aa2;font-weight:normal;white-space:nowrap;letter-spacing:-0.2px;"><b style="color:#f2f2f7">0.71%/hour</b>, limit in <b style="color:#f2f2f7">5d 3h</b> · will hit 100% <b style="color:#e0e0ea">before</b> reset</div><div class="a" style="left:0.00px;top:308.30px;width:205.50px;height:1.00px;background:#23232d"></div><div class="a" style="left:0.00px;top:316.57px;font-size:7.6px;line-height:1;color:#76748c;font-weight:normal;white-space:nowrap;letter-spacing:0.1px;">D · LAST 95 SAMPLES</div><svg class="a" style="left:0;top:0;width:282px;height:480px;overflow:visible" viewBox="0 0 282 480"><defs><linearGradient id="cgA" x1="0" y1="0" x2="0" y2="1"><stop offset="0" stop-color="#5b50b8" stop-opacity="0.55"/><stop offset="1" stop-color="#5b50b8" stop-opacity="0"/></linearGradient></defs><path d="M-0.3 354.8 L53.0 352.8 L90.6 352.8 L94.7 351.1 L100.0 350.0 L102.0 345.2 L115.6 344.8 L118.7 357.3 L142.8 357.3 L146.9 355.3 L151.1 354.2 L153.2 348.6 L161.5 348.0 L163.6 343.8 L170.9 343.8 L173.0 357.8 L184.5 357.3 L187.6 355.3 L190.8 356.9 L203.3 356.3 L203.3 366 L-0.3 366 Z" fill="url(#cgA)" transform="translate(0,0)"/><path d="M-0.3 354.8 L53.0 352.8 L90.6 352.8 L94.7 351.1 L100.0 350.0 L102.0 345.2 L115.6 344.8 L118.7 357.3 L142.8 357.3 L146.9 355.3 L151.1 354.2 L153.2 348.6 L161.5 348.0 L163.6 343.8 L170.9 343.8 L173.0 357.8 L184.5 357.3 L187.6 355.3 L190.8 356.9 L203.3 356.3" fill="none" stroke="#6e62e0" stroke-width="1.3"/></svg><div class="a" style="left:0.00px;top:371.30px;width:205.50px;height:1.00px;background:#23232d"></div><div class="a" style="left:0.00px;top:381.06px;font-size:8.2px;line-height:1;color:#8c8aa2;font-weight:normal;white-space:nowrap;letter-spacing:-0.15px;"><b style="color:#dcdce6">rminal scraping</b> — AnvilTerm reads /usage directly from</div><div class="a" style="left:0.00px;top:392.56px;font-size:8.2px;line-height:1;color:#8c8aa2;font-weight:normal;white-space:nowrap;letter-spacing:-0.15px;">LI. No API calls. No rate limits.</div><div class="a" style="left:137.00px;top:407.50px;width:34.00px;height:1.20px;background:#3b6b45"></div></div></div>
  <div class="a" style="left:1239.5px;width:400px;text-align:center;top:579.8px;font-size:24px;line-height:1;color:#c6c6d0;white-space:nowrap;letter-spacing:0.35px">usage-claude.png</div>
<!--/POPUP-->
  <div id="winbot"></div>
</div>
</body></html>
